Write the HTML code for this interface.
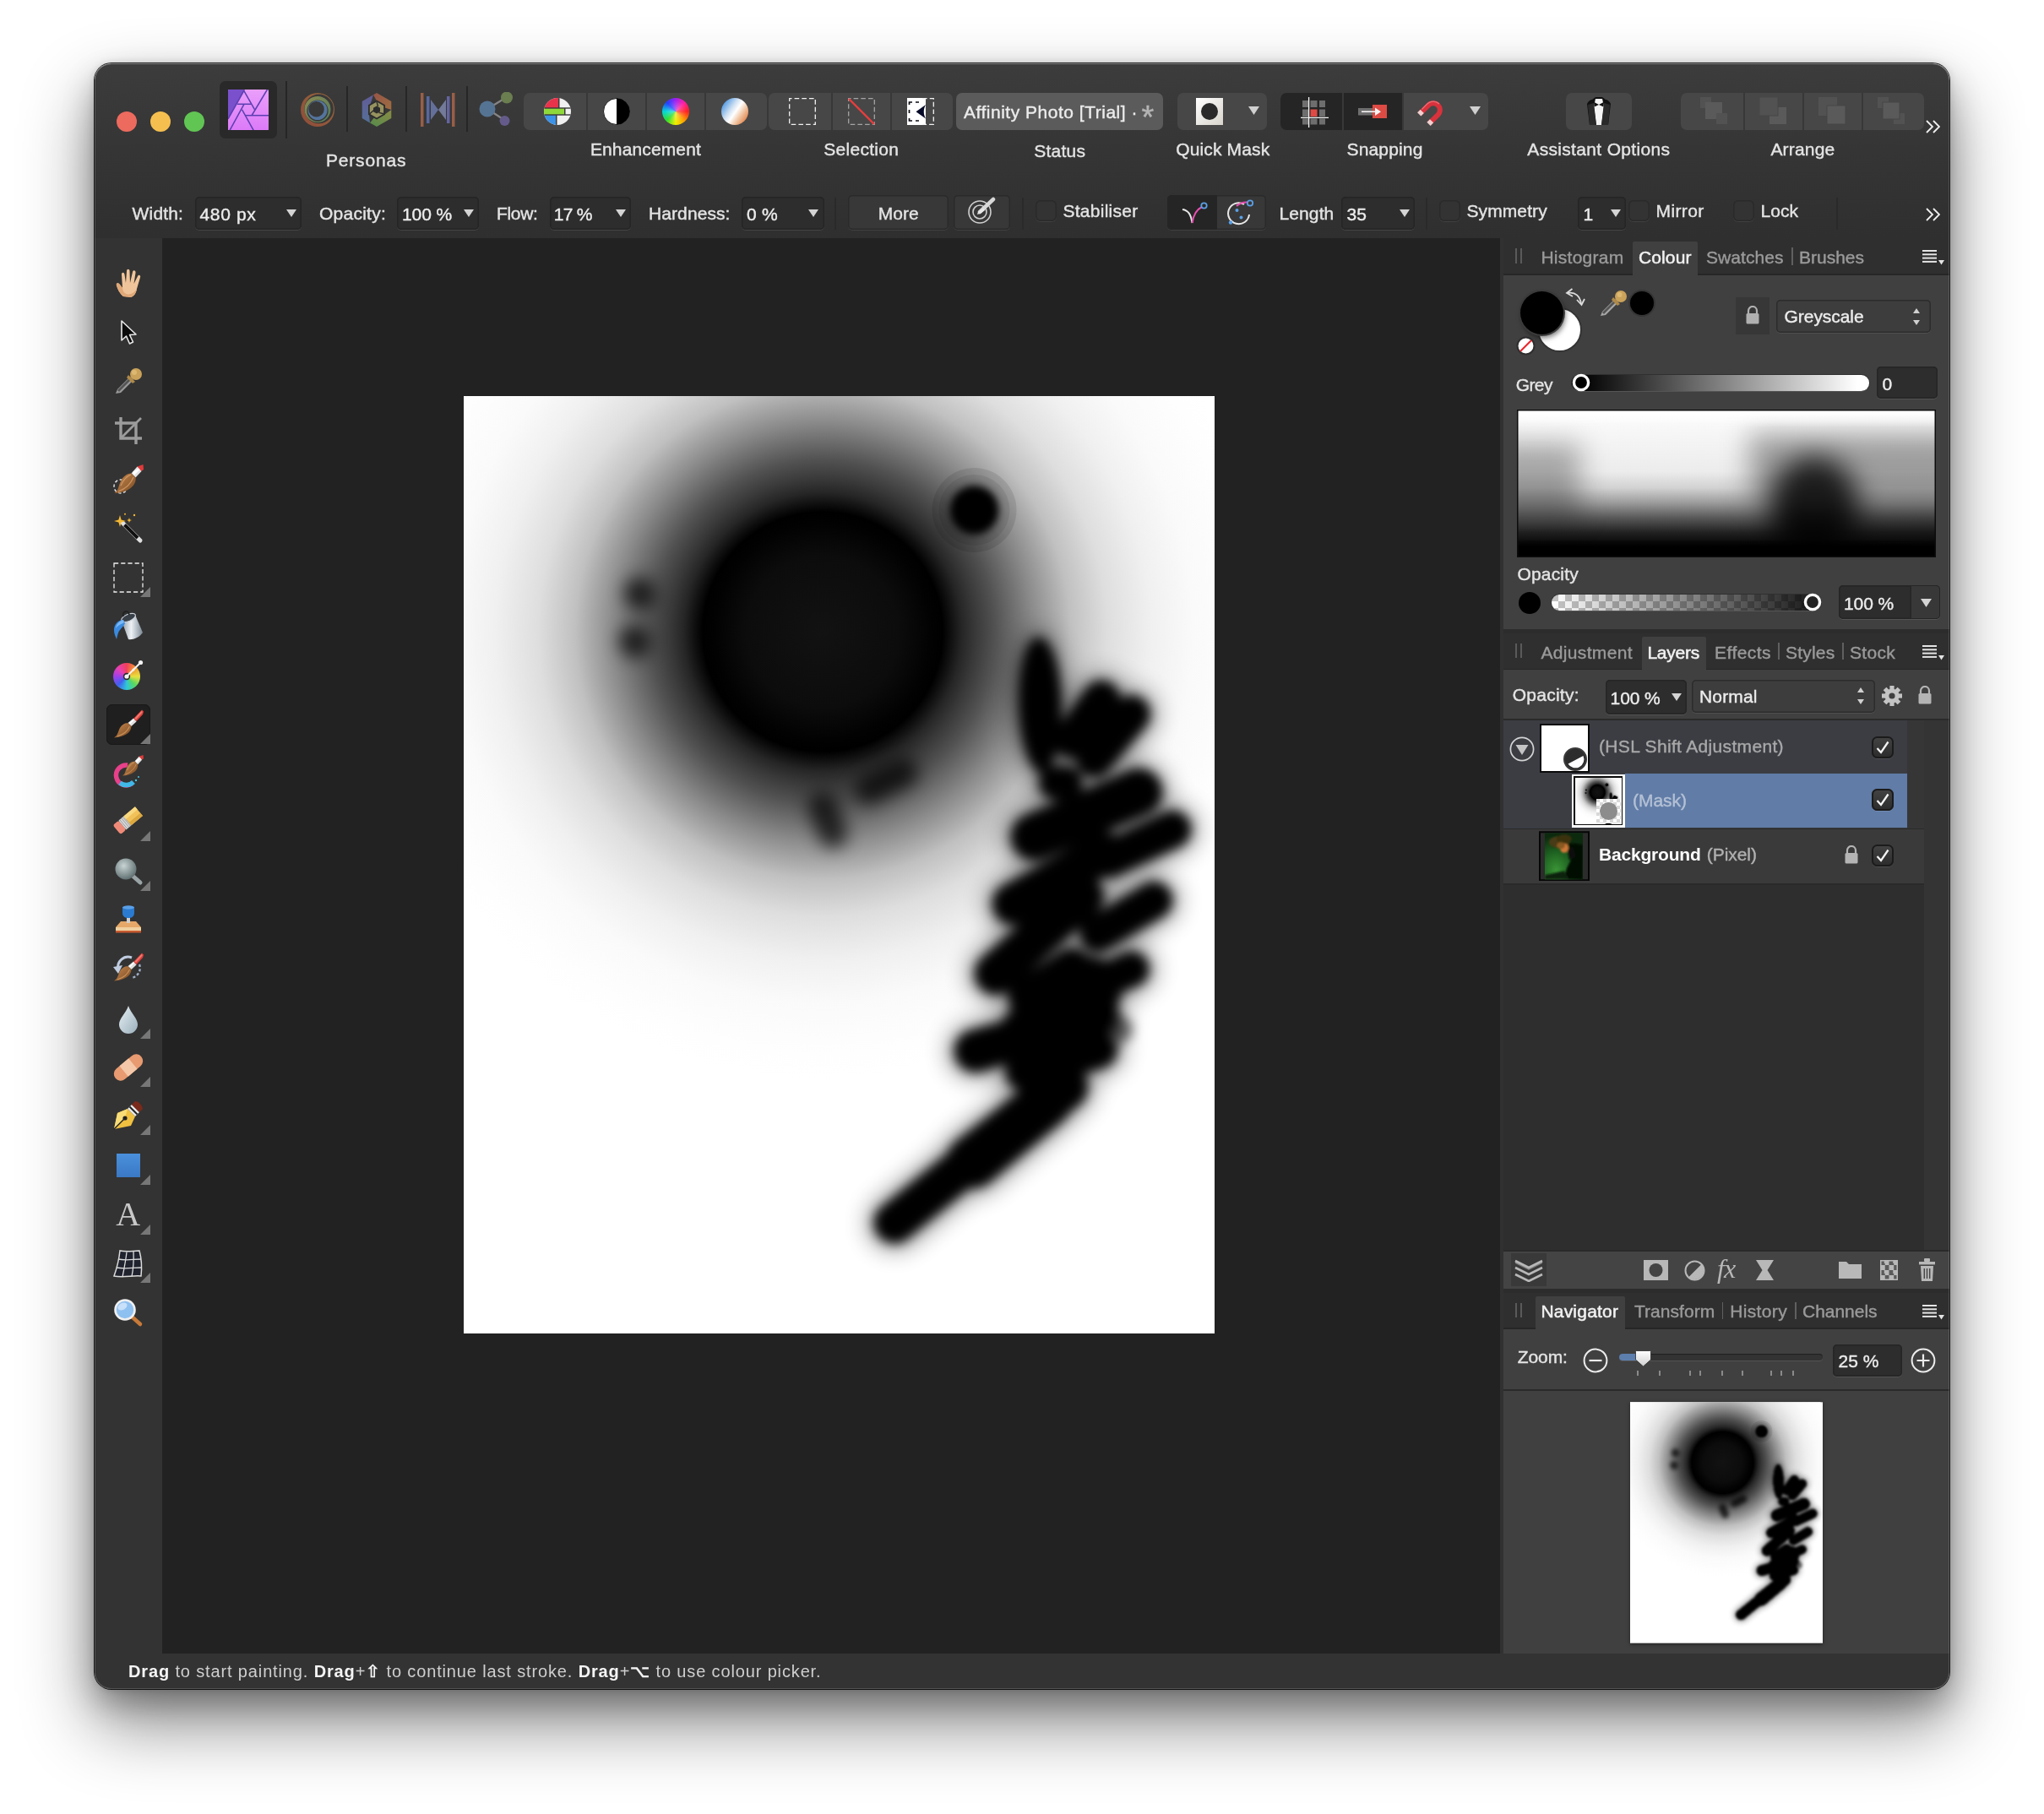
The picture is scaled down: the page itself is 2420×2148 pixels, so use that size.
<!DOCTYPE html>
<html lang="en"><head><meta charset="utf-8"><title>Affinity Photo [Trial]</title>
<style>
html,body{margin:0;padding:0;}
body{width:2420px;height:2148px;position:relative;overflow:hidden;background:#ffffff;font-family:"Liberation Sans",sans-serif;}
</style></head><body>
<div style="position:absolute;left:112px;top:75px;width:2196px;height:1925px;border-radius:20px;background:linear-gradient(#3c3c3c 0px,#353535 105px,#2f2f2f 207px,#2f2f2f 100%);box-shadow:0 0 0 1px rgba(0,0,0,.85),0 40px 84px 2px rgba(0,0,0,.46),0 18px 36px rgba(0,0,0,.26),0 0 10px rgba(0,0,0,.15);"></div>
<div style="position:absolute;left:0;top:0;width:2420px;height:2148px;clip-path:inset(75px 112px 148px 112px round 20px);will-change:transform;"><div style="position:absolute;left:111.0px;top:282.0px;width:81.0px;height:1676.0px;background:#333333;"></div>
<div style="position:absolute;left:192.0px;top:282.0px;width:1584.0px;height:1676.0px;background:#222222;"></div>
<div style="position:absolute;left:1776.0px;top:282.0px;width:4.0px;height:1676.0px;background:#313131;"></div>
<div style="position:absolute;left:1780.0px;top:282.0px;width:528.0px;height:1676.0px;background:#404040;"></div>
<svg style="position:absolute;left:549.0px;top:469.0px;" width="889" height="1110" viewBox="0 0 889 1110"><defs><radialGradient id="ag" gradientUnits="userSpaceOnUse" cx="425" cy="279" r="530"><stop offset="0.0" stop-color="#121212"/><stop offset="0.1698" stop-color="#0c0c0c"/><stop offset="0.2415" stop-color="#020202"/><stop offset="0.2679" stop-color="#000"/><stop offset="0.2868" stop-color="#101010"/><stop offset="0.3113" stop-color="#262626"/><stop offset="0.3396" stop-color="#383838"/><stop offset="0.3849" stop-color="#525252"/><stop offset="0.4415" stop-color="#787878"/><stop offset="0.4679" stop-color="#8a8a8a"/><stop offset="0.5283" stop-color="#b0b0b0"/><stop offset="0.5528" stop-color="#c0c0c0"/><stop offset="0.6358" stop-color="#dedede"/><stop offset="0.7321" stop-color="#f0f0f0"/><stop offset="0.8283" stop-color="#fafafa"/><stop offset="0.9434" stop-color="#fefefe"/><stop offset="1.0" stop-color="#ffffff"/></radialGradient><filter id="ab7" x="-50%" y="-50%" width="200%" height="200%"><feGaussianBlur stdDeviation="7"/></filter><filter id="ab9" x="-50%" y="-50%" width="200%" height="200%"><feGaussianBlur stdDeviation="10"/></filter><filter id="ab14" x="-50%" y="-50%" width="200%" height="200%"><feGaussianBlur stdDeviation="14"/></filter><filter id="ab5" x="-50%" y="-50%" width="200%" height="200%"><feGaussianBlur stdDeviation="5"/></filter><clipPath id="ac"><rect x="0" y="0" width="889" height="1110"/></clipPath></defs><g clip-path="url(#ac)"><rect x="0" y="0" width="889" height="1110" fill="#fff"/><circle cx="425" cy="279" r="530" fill="url(#ag)"/><circle cx="604.5" cy="135" r="50" fill="#000" opacity="0.10"/><circle cx="604.5" cy="135" r="42" fill="#000" opacity="0.08"/><circle cx="604.5" cy="135" r="29" fill="#000" filter="url(#ab5)"/><g filter="url(#ab9)" opacity="0.72" stroke="#000" stroke-linecap="round" fill="none"><path d="M208 233 L209 235" stroke-width="36"/><path d="M202 290 L203 292" stroke-width="36"/><path d="M425 486 L437 518" stroke-width="34"/><path d="M480 466 L520 446" stroke-width="34"/></g><g filter="url(#ab14)" stroke="#000" fill="#000" stroke-linecap="round" opacity="0.42"><ellipse cx="682.5" cy="366" rx="33.0" ry="88.0" stroke="none" transform="rotate(-1.5 682.5 366)"/><path d="M755 359 L720 407" stroke-width="60" fill="none"/><path d="M790.6 376.5 L746.5 429.5" stroke-width="60" fill="none"/><path d="M701 458 L712.5 458" stroke-width="56" fill="none"/><path d="M799 469 L676 522" stroke-width="72" fill="none"/><path d="M839 513 L764 548.5" stroke-width="60" fill="none"/><path d="M758 541 L651 601.5" stroke-width="66" fill="none"/><path d="M817 597 L751 636.7" stroke-width="60" fill="none"/><path d="M733 592.6 L630 684" stroke-width="66" fill="none"/><path d="M790.6 678.6 L755 694" stroke-width="58" fill="none"/><path d="M720 676.4 L667 711.7" stroke-width="62" fill="none"/><path d="M740 702 L672 758" stroke-width="94" fill="none"/><path d="M751 733.7 L606 775.6" stroke-width="66" fill="none"/><path d="M751 773.4 L664 800" stroke-width="62" fill="none"/><path d="M711 817.5 L600 905" stroke-width="72" fill="none"/><path d="M690 835 L603 908" stroke-width="76" fill="none"/><path d="M612 896 L510 979" stroke-width="64" fill="none"/></g><g filter="url(#ab7)" stroke="#000" fill="#000" stroke-linecap="round" opacity="1"><ellipse cx="682.5" cy="366" rx="25.0" ry="80.0" stroke="none" transform="rotate(-1.5 682.5 366)"/><path d="M755 359 L720 407" stroke-width="44" fill="none"/><path d="M790.6 376.5 L746.5 429.5" stroke-width="44" fill="none"/><path d="M701 458 L712.5 458" stroke-width="40" fill="none"/><path d="M799 469 L676 522" stroke-width="56" fill="none"/><path d="M839 513 L764 548.5" stroke-width="44" fill="none"/><path d="M758 541 L651 601.5" stroke-width="50" fill="none"/><path d="M817 597 L751 636.7" stroke-width="44" fill="none"/><path d="M733 592.6 L630 684" stroke-width="50" fill="none"/><path d="M790.6 678.6 L755 694" stroke-width="42" fill="none"/><path d="M720 676.4 L667 711.7" stroke-width="46" fill="none"/><path d="M740 702 L672 758" stroke-width="78" fill="none"/><path d="M751 733.7 L606 775.6" stroke-width="50" fill="none"/><path d="M751 773.4 L664 800" stroke-width="46" fill="none"/><path d="M711 817.5 L600 905" stroke-width="56" fill="none"/><path d="M690 835 L603 908" stroke-width="60" fill="none"/><path d="M612 896 L510 979" stroke-width="48" fill="none"/></g><circle cx="776" cy="750" r="16" fill="#000" opacity="0.55" filter="url(#ab7)"/></g></svg>
<div style="position:absolute;left:137.75px;top:131.75px;width:24.5px;height:24.5px;border-radius:50%;background:#ed6a5e;"></div>
<div style="position:absolute;left:177.75px;top:131.75px;width:24.5px;height:24.5px;border-radius:50%;background:#f5bf4f;"></div>
<div style="position:absolute;left:217.75px;top:131.75px;width:24.5px;height:24.5px;border-radius:50%;background:#61c554;"></div>
<div style="position:absolute;left:260.0px;top:96.0px;width:68.0px;height:68.0px;background:#292929;border-radius:7px;"></div>
<svg style="position:absolute;left:270.0px;top:105.7px;" width="48" height="48.4" viewBox="0 0 48 48.4"><defs><linearGradient id="pp" x1="0" y1="0" x2="0" y2="1"><stop offset="0" stop-color="#ea9ffb"/><stop offset="1" stop-color="#dc7af8"/></linearGradient></defs>
<rect x="0" y="0" width="48" height="48.4" rx="1.5" fill="url(#pp)"/>
<path d="M0 1.5 Q0 0 1.5 0 H19.4 L0 34.7 Z" fill="#7a50cc"/>
<g stroke="#5a3fb0" stroke-width="1.5" fill="none" stroke-linecap="butt"><path d="M19.4 0.3 L0 34.9"/><path d="M46.4 0 L28.2 30.5"/><path d="M19 1.8 L31.6 23.9"/><path d="M11 17.3 H27.4"/><path d="M18.8 17.6 L2 48.4"/><path d="M16.6 23.8 L30.2 48.4"/><path d="M20.2 30.7 H48"/></g></svg>
<div style="position:absolute;left:338.0px;top:96.0px;width:2.0px;height:68.0px;background:#262626;"></div>
<div style="position:absolute;left:410.0px;top:102.0px;width:2.0px;height:54.0px;background:#262626;"></div>
<div style="position:absolute;left:480.0px;top:102.0px;width:2.0px;height:54.0px;background:#262626;"></div>
<div style="position:absolute;left:552.0px;top:102.0px;width:2.0px;height:54.0px;background:#262626;"></div>
<svg style="position:absolute;left:356.0px;top:110.0px;opacity:.85;" width="40" height="40" viewBox="0 0 40 40"><defs><linearGradient id="lq1" x1="1" y1="0" x2="0" y2="1"><stop offset="0" stop-color="#a8703c"/><stop offset="1" stop-color="#a0503a"/></linearGradient><linearGradient id="lq2" x1="0" y1="0" x2="1" y2="1"><stop offset="0" stop-color="#9a9a58"/><stop offset="1" stop-color="#5a8a60"/></linearGradient></defs>
<path fill-rule="evenodd" fill="url(#lq1)" d="M20 0 A20 20 0 1 0 20 40 A20 20 0 1 0 20 0 Z M21.6 1.6 A17.3 17.3 0 1 1 21.6 36.2 A17.3 17.3 0 1 1 21.6 1.6 Z"/>
<path fill-rule="evenodd" fill="url(#lq2)" d="M20 4 A15.5 15.5 0 1 0 20 35 A15.5 15.5 0 1 0 20 4 Z M20 8.6 A12.6 12.6 0 1 1 20 33.8 A12.6 12.6 0 1 1 20 8.6 Z"/>
<path fill-rule="evenodd" fill="#5a7fae" d="M20 9 A11.5 11.5 0 1 0 20 32 A11.5 11.5 0 1 0 20 9 Z M18.6 10 A9.2 9.2 0 1 1 18.6 28.4 A9.2 9.2 0 1 1 18.6 10 Z"/></svg>
<svg style="position:absolute;left:428.0px;top:110.0px;opacity:.85;" width="36" height="40" viewBox="0 0 36 40"><defs><linearGradient id="dv1" x1="0" y1="0" x2="0" y2="1"><stop offset="0" stop-color="#6a62a8"/><stop offset="1" stop-color="#5a7aa8"/></linearGradient><linearGradient id="dv2" x1="0" y1="0" x2="1" y2="1"><stop offset="0" stop-color="#a85a4a"/><stop offset="1" stop-color="#b07844"/></linearGradient><linearGradient id="dv3" x1="1" y1="0" x2="0" y2="1"><stop offset="0" stop-color="#9a9a48"/><stop offset="1" stop-color="#5a9a50"/></linearGradient></defs>
<g transform="translate(18 20)"><path d="M-4 -17.7 L0 -20 L17.3 -10 V0 L8 -3 L0 -10.5 Z" fill="url(#dv2)"/><path d="M17.3 0 V10 L0 20 L-8 15.4 L-2 8 L9.5 5.5 Z" fill="url(#dv3)"/><path d="M-8 15.4 L-17.3 10 V-10 L-4 -17.7 L-8 -5 L-9 5.5 Z" fill="url(#dv1)"/>
<path d="M0 -11.5 L10 -5.8 V5.8 L0 11.5 L-10 5.8 V-5.8 Z" fill="#2c2c2c"/><path d="M0 -9.5 L8.2 -4.7 V4.7 L0 9.5 L-8.2 4.7 V-4.7 Z" fill="#a8a468"/><path d="M0 -4.6 L4 -2.3 V2.3 L0 4.6 L-4 2.3 V-2.3 Z" fill="#2c2c2c"/><path d="M0 -9.5 L1.5 -4 M8.2 4.7 L2.5 3.4 M-8.2 4.7 L-3.8 .8" stroke="#2c2c2c" stroke-width="1.4"/></g></svg>
<svg style="position:absolute;left:497.5px;top:110.0px;opacity:.88;" width="41" height="40" viewBox="0 0 41 40"><rect x="0" y="0" width="3.5" height="40" fill="#a5654a"/><rect x="7" y="4" width="3.5" height="32" fill="#5e6fae"/><path d="M12 8 L21 20 L12 32 Z" fill="#6a78a8"/><path d="M30 8 L21 20 L30 32 Z" fill="#7b83a8"/><rect x="31" y="4" width="3.5" height="32" fill="#6a6ab0"/><rect x="37" y="0" width="3.5" height="40" fill="#a5654a"/></svg>
<svg style="position:absolute;left:567.0px;top:109.0px;opacity:.92;" width="42" height="42" viewBox="0 0 42 42"><path d="M10 20 L33 6 M10 20 L30 33" stroke="#8c8c8c" stroke-width="2.2"/><circle cx="10" cy="20" r="9.5" fill="#587a9c"/><circle cx="33" cy="6.5" r="7" fill="#6f8552"/><circle cx="30.5" cy="34" r="6" fill="#6a5f92"/></svg>
<div style="position:absolute;left:620.0px;top:110.0px;width:288.0px;height:44.0px;background:#474747;border-radius:7px;"></div><div style="position:absolute;left:693.5px;top:110.0px;width:2.0px;height:44.0px;background:#383838;"></div><div style="position:absolute;left:764.0px;top:110.0px;width:2.0px;height:44.0px;background:#383838;"></div><div style="position:absolute;left:834.0px;top:110.0px;width:2.0px;height:44.0px;background:#383838;"></div>
<svg style="position:absolute;left:643.5px;top:116.0px;" width="32" height="32" viewBox="0 0 32 32"><defs><clipPath id="alc"><circle cx="16" cy="16" r="16"/></clipPath></defs><g clip-path="url(#alc)"><rect width="32" height="32" fill="#f0f0f0"/><rect x="0" y="0" width="17" height="12" fill="#e8334b"/><rect x="0" y="12" width="24" height="8" fill="#8fd83a"/><rect x="0" y="20" width="14" height="12" fill="#3c92e6"/><rect x="17" y="0" width="1.5" height="12" fill="#3a3a3a"/><rect x="0" y="11.3" width="32" height="1.4" fill="#3a3a3a"/><rect x="0" y="19.3" width="32" height="1.4" fill="#3a3a3a"/><rect x="24" y="12" width="1.5" height="8" fill="#3a3a3a"/><rect x="14" y="20" width="1.5" height="12" fill="#3a3a3a"/></g></svg>
<svg style="position:absolute;left:713.5px;top:116.0px;" width="32" height="32" viewBox="0 0 32 32"><circle cx="16" cy="16" r="15.5" fill="#fff" stroke="#1a1a1a" stroke-width="1"/><path d="M16 .5 A15.5 15.5 0 0 1 16 31.5 Z" fill="#000"/></svg>
<div style="position:absolute;left:783.5px;top:116px;width:32px;height:32px;border-radius:50%;background:radial-gradient(circle,rgba(255,255,255,.35) 0,rgba(255,255,255,0) 60%),conic-gradient(from 90deg,#ff2020,#ff9a00,#f0f000,#30e030,#00d8d8,#2040ff,#a020f0,#ff20a0,#ff2020);"></div>
<div style="position:absolute;left:853.5px;top:116px;width:32px;height:32px;border-radius:50%;background:linear-gradient(125deg,#3c8de0 8%,#cfe0f2 38%,#ffffff 52%,#f0c8a8 68%,#e0783a 92%);"></div>
<div style="position:absolute;left:910.0px;top:110.0px;width:218.0px;height:44.0px;background:#474747;border-radius:7px;"></div><div style="position:absolute;left:983.5px;top:110.0px;width:2.0px;height:44.0px;background:#383838;"></div><div style="position:absolute;left:1054.0px;top:110.0px;width:2.0px;height:44.0px;background:#383838;"></div>
<svg style="position:absolute;left:934.0px;top:116.0px;" width="32" height="32" viewBox="0 0 32 32"><rect x=".7" y=".7" width="30.6" height="30.6" fill="none" stroke="#f2f2f2" stroke-width="1.3" stroke-dasharray="5.6 3.1" stroke-dashoffset="2.8"/></svg>
<svg style="position:absolute;left:1004.0px;top:116.0px;" width="32" height="32" viewBox="0 0 32 32"><rect x=".7" y=".7" width="30.6" height="30.6" fill="none" stroke="#a4a4a4" stroke-width="1.3" stroke-dasharray="5.6 3.1" stroke-dashoffset="2.8"/><path d="M1 1 L31 31" stroke="#ea3d3d" stroke-width="2.4"/></svg>
<svg style="position:absolute;left:1074.0px;top:116.0px;" width="32" height="32" viewBox="0 0 32 32"><rect x="0" y="0" width="22" height="32" fill="#fff"/><path d="M18 .7 H31.3 V31.3 H18" fill="none" stroke="#f2f2f2" stroke-width="1.3" stroke-dasharray="5.6 3.1"/><path d="M2.5 8 V5 H6 M10 5 H14 M2.5 14 V18 M2.5 24 V27 H6 M10 27 H14" fill="none" stroke="#0a0a14" stroke-width="1.7"/><path d="M22 8 L10.5 16.2 L22 24.5 C19 19.5 19 13 22 8 Z" fill="#050a28"/></svg>
<div style="position:absolute;left:1132.0px;top:110.0px;width:245.0px;height:44.0px;background:#5b5b5b;border-radius:7px;"></div>
<span style="position:absolute;left:1141.0px;top:120.0px;font-size:21px;line-height:25px;color:#ececec;white-space:nowrap;-webkit-text-stroke:0.4px #ececec;letter-spacing:0.51px;">Affinity Photo [Trial] ·</span>
<span style="position:absolute;left:1351.5px;top:116.0px;font-size:38px;line-height:46px;color:#b4b4b4;white-space:nowrap;-webkit-text-stroke:0.4px #b4b4b4;">*</span>
<div style="position:absolute;left:1393.5px;top:110.0px;width:106.5px;height:44.0px;background:#474747;border-radius:7px;"></div>
<svg style="position:absolute;left:1416.0px;top:116.0px;" width="32" height="32" viewBox="0 0 32 32"><defs><linearGradient id="qm" x1="0" y1="0" x2="1" y2="1"><stop offset="0" stop-color="#ffffff"/><stop offset="1" stop-color="#d8d4cc"/></linearGradient></defs><rect width="32" height="32" fill="url(#qm)"/><circle cx="16" cy="16" r="10" fill="#2a2a2a"/></svg>
<svg style="position:absolute;left:1478.0px;top:126.0px;" width="13" height="10" viewBox="0 0 13 10"><path d="M0 0 H13 L6.5 10 Z" fill="#d0d0d0"/></svg>
<div style="position:absolute;left:1516.0px;top:110.0px;width:246.0px;height:44.0px;background:#474747;border-radius:7px;"></div>
<div style="position:absolute;left:1516.0px;top:110.0px;width:145.0px;height:44.0px;background:#252525;border-radius:7px 0 0 7px;"></div>
<div style="position:absolute;left:1589.0px;top:110.0px;width:2.0px;height:44.0px;background:#383838;"></div>
<div style="position:absolute;left:1660.0px;top:110.0px;width:2.0px;height:44.0px;background:#383838;"></div>
<svg style="position:absolute;left:1540.0px;top:118.0px;overflow:visible;" width="34" height="30" viewBox="0 -1 34 30"><g fill="#6e6e6e"><rect x="2" y="0" width="7" height="8"/><rect x="11.5" y="0" width="8" height="8"/><rect x="22" y="0" width="7" height="8"/><rect x="2" y="10.5" width="7" height="8.5"/><rect x="22" y="10.5" width="7" height="8.5"/><rect x="2" y="21.5" width="7" height="7"/><rect x="11.5" y="21.5" width="8" height="7"/><rect x="22" y="21.5" width="7" height="7"/></g><rect x="11.5" y="10.5" width="8" height="8.5" fill="#dd4b44"/><path d="M9.6 -4 V32 M0 20.3 H33" stroke="#f4f4f4" stroke-width="1.3"/></svg>
<svg style="position:absolute;left:1608.0px;top:124.0px;" width="34" height="16" viewBox="0 0 34 16"><rect x="0" y="4" width="17" height="8.5" fill="#6e6e6e"/><rect x="17" y="0" width="17" height="16" fill="#dd4b44"/><path d="M4 8.2 H22" stroke="#f4f4f4" stroke-width="1.6"/><path d="M20 3.5 L27 8.2 L20 13 Z" fill="#f4f4f4"/></svg>
<svg style="position:absolute;left:1677.0px;top:116.0px;overflow:visible;" width="34" height="34" viewBox="0 0 34 34"><g transform="rotate(45 17 17)"><path d="M9 28 V13 A8 8 0 0 1 25 13 V28" fill="none" stroke="#d8323c" stroke-width="6"/><path d="M9 28.5 V23.5 M25 28.5 V23.5" stroke="#f0d0d0" stroke-width="6"/><path d="M7 22 V13 A10 10 0 0 1 17 3" fill="none" stroke="#f07078" stroke-width="1.4" opacity=".9"/></g></svg>
<svg style="position:absolute;left:1739.5px;top:126.0px;" width="13" height="10" viewBox="0 0 13 10"><path d="M0 0 H13 L6.5 10 Z" fill="#d0d0d0"/></svg>
<div style="position:absolute;left:1854.0px;top:110.0px;width:78.0px;height:44.0px;background:#474747;border-radius:7px;"></div>
<svg style="position:absolute;left:1875.0px;top:114.0px;" width="36" height="36" viewBox="0 0 36 36"><path d="M10 4 C8 4 5 6 4 9 L7 34 H29 L32 9 C31 6 28 4 26 4 L22 1 H14 Z" fill="#101010"/><path d="M14 3 H22 L24 12 L21 34 H15 L12 12 Z" fill="#f4f4f4"/><path d="M12.5 7 L18 10 L23.5 7 V12.5 L18 10 L12.5 12.5 Z" fill="#101010"/><path d="M5 10 L12 8 L15 34 H7 Z M31 10 L24 8 L21 34 H29 Z" fill="#2a2a2a"/></svg>
<div style="position:absolute;left:1990.0px;top:110.0px;width:288.0px;height:44.0px;background:#474747;border-radius:7px;"></div><div style="position:absolute;left:2063.5px;top:110.0px;width:2.0px;height:44.0px;background:#383838;"></div><div style="position:absolute;left:2134.0px;top:110.0px;width:2.0px;height:44.0px;background:#383838;"></div><div style="position:absolute;left:2204.0px;top:110.0px;width:2.0px;height:44.0px;background:#383838;"></div>
<svg style="position:absolute;left:2013.0px;top:115.0px;" width="34" height="34" viewBox="0 0 34 34"><rect x="0" y="0" width="13" height="13" fill="#525252"/><rect x="6" y="6" width="20" height="20" fill="#5a5a5a"/><rect x="19" y="19" width="13" height="13" fill="#525252"/></svg>
<svg style="position:absolute;left:2083.0px;top:115.0px;" width="34" height="34" viewBox="0 0 34 34"><rect x="12" y="12" width="20" height="20" fill="#5a5a5a"/><rect x="0" y="0" width="22" height="22" fill="#525252" stroke="#474747" stroke-width="1"/></svg>
<svg style="position:absolute;left:2153.0px;top:115.0px;" width="34" height="34" viewBox="0 0 34 34"><rect x="0" y="0" width="22" height="22" fill="#525252"/><rect x="10" y="10" width="22" height="22" fill="#5a5a5a" stroke="#474747" stroke-width="1"/></svg>
<svg style="position:absolute;left:2223.0px;top:115.0px;" width="34" height="34" viewBox="0 0 34 34"><rect x="0" y="0" width="13" height="13" fill="#525252"/><rect x="19" y="19" width="13" height="13" fill="#525252"/><rect x="6" y="6" width="20" height="20" fill="#5a5a5a" stroke="#474747" stroke-width="1"/></svg>
<svg style="position:absolute;left:2280.0px;top:141.5px;" width="17" height="16" viewBox="0 0 17 16"><path d="M1 1 L8 8 L1 15 M9 1 L16 8 L9 15" fill="none" stroke="#f0f0f0" stroke-width="1.8"/></svg>
<svg style="position:absolute;left:2280.0px;top:246.0px;" width="17" height="16" viewBox="0 0 17 16"><path d="M1 1 L8 8 L1 15 M9 1 L16 8 L9 15" fill="none" stroke="#f0f0f0" stroke-width="1.8"/></svg>
<span style="position:absolute;left:385.9px;top:177.0px;font-size:21px;line-height:25px;color:#e4e4e4;white-space:nowrap;-webkit-text-stroke:0.4px #e4e4e4;letter-spacing:0.85px;">Personas</span>
<span style="position:absolute;left:698.9px;top:164.0px;font-size:21px;line-height:25px;color:#e4e4e4;white-space:nowrap;-webkit-text-stroke:0.4px #e4e4e4;letter-spacing:0.13px;">Enhancement</span>
<span style="position:absolute;left:975.2px;top:164.0px;font-size:21px;line-height:25px;color:#e4e4e4;white-space:nowrap;-webkit-text-stroke:0.4px #e4e4e4;letter-spacing:0.29px;">Selection</span>
<span style="position:absolute;left:1224.2px;top:166.0px;font-size:21px;line-height:25px;color:#e4e4e4;white-space:nowrap;-webkit-text-stroke:0.4px #e4e4e4;letter-spacing:0.24px;">Status</span>
<span style="position:absolute;left:1392.3px;top:164.0px;font-size:21px;line-height:25px;color:#e4e4e4;white-space:nowrap;-webkit-text-stroke:0.4px #e4e4e4;letter-spacing:0.13px;">Quick Mask</span>
<span style="position:absolute;left:1594.5px;top:164.0px;font-size:21px;line-height:25px;color:#e4e4e4;white-space:nowrap;-webkit-text-stroke:0.4px #e4e4e4;letter-spacing:0.16px;">Snapping</span>
<span style="position:absolute;left:1808.3px;top:164.0px;font-size:21px;line-height:25px;color:#e4e4e4;white-space:nowrap;-webkit-text-stroke:0.4px #e4e4e4;letter-spacing:0.33px;">Assistant Options</span>
<span style="position:absolute;left:2096.4px;top:164.0px;font-size:21px;line-height:25px;color:#e4e4e4;white-space:nowrap;-webkit-text-stroke:0.4px #e4e4e4;letter-spacing:0.18px;">Arrange</span>
<span style="position:absolute;left:156.6px;top:240.0px;font-size:21px;line-height:25px;color:#e4e4e4;white-space:nowrap;-webkit-text-stroke:0.4px #e4e4e4;letter-spacing:0.16px;">Width:</span>
<div style="position:absolute;left:230.6px;top:233px;width:126.79999999999998px;height:39px;background:#2d2d2d;border-radius:5px;box-shadow:inset 0 0 0 1.5px #252525,0 1px 0 rgba(255,255,255,.10);"></div><span style="position:absolute;left:236.5px;top:241.0px;font-size:21px;line-height:25px;color:#ececec;white-space:nowrap;-webkit-text-stroke:0.4px #ececec;letter-spacing:0.66px;">480 px</span><svg style="position:absolute;left:338.5px;top:247.5px;" width="12" height="9" viewBox="0 0 12 9"><path d="M0 0 H12 L6 9 Z" fill="#d4d4d4"/></svg>
<span style="position:absolute;left:378.0px;top:240.0px;font-size:21px;line-height:25px;color:#e4e4e4;white-space:nowrap;-webkit-text-stroke:0.4px #e4e4e4;letter-spacing:0.25px;">Opacity:</span>
<div style="position:absolute;left:470.4px;top:233px;width:96.89999999999998px;height:39px;background:#2d2d2d;border-radius:5px;box-shadow:inset 0 0 0 1.5px #252525,0 1px 0 rgba(255,255,255,.10);"></div><span style="position:absolute;left:476.0px;top:241.0px;font-size:21px;line-height:25px;color:#ececec;white-space:nowrap;-webkit-text-stroke:0.4px #ececec;letter-spacing:-0.11px;">100 %</span><svg style="position:absolute;left:549.0px;top:247.5px;" width="12" height="9" viewBox="0 0 12 9"><path d="M0 0 H12 L6 9 Z" fill="#d4d4d4"/></svg>
<span style="position:absolute;left:588.0px;top:240.0px;font-size:21px;line-height:25px;color:#e4e4e4;white-space:nowrap;-webkit-text-stroke:0.4px #e4e4e4;letter-spacing:-0.33px;">Flow:</span>
<div style="position:absolute;left:650.5px;top:233px;width:96.79999999999995px;height:39px;background:#2d2d2d;border-radius:5px;box-shadow:inset 0 0 0 1.5px #252525,0 1px 0 rgba(255,255,255,.10);"></div><span style="position:absolute;left:655.8px;top:241.0px;font-size:21px;line-height:25px;color:#ececec;white-space:nowrap;-webkit-text-stroke:0.4px #ececec;letter-spacing:-0.72px;">17 %</span><svg style="position:absolute;left:729.0px;top:247.5px;" width="12" height="9" viewBox="0 0 12 9"><path d="M0 0 H12 L6 9 Z" fill="#d4d4d4"/></svg>
<span style="position:absolute;left:768.0px;top:240.0px;font-size:21px;line-height:25px;color:#e4e4e4;white-space:nowrap;-webkit-text-stroke:0.4px #e4e4e4;letter-spacing:0.09px;">Hardness:</span>
<div style="position:absolute;left:878px;top:233px;width:97.70000000000005px;height:39px;background:#2d2d2d;border-radius:5px;box-shadow:inset 0 0 0 1.5px #252525,0 1px 0 rgba(255,255,255,.10);"></div><span style="position:absolute;left:884.0px;top:241.0px;font-size:21px;line-height:25px;color:#ececec;white-space:nowrap;-webkit-text-stroke:0.4px #ececec;letter-spacing:0.27px;">0 %</span><svg style="position:absolute;left:957.0px;top:247.5px;" width="12" height="9" viewBox="0 0 12 9"><path d="M0 0 H12 L6 9 Z" fill="#d4d4d4"/></svg>
<div style="position:absolute;left:988.0px;top:234.0px;width:2.0px;height:38.0px;background:#2a2a2a;"></div>
<div style="position:absolute;left:1004.4px;top:231px;width:118.60000000000002px;height:41px;background:#383838;border-radius:5px;box-shadow:inset 0 0 0 1.5px #2a2a2a,0 1px 0 rgba(255,255,255,.08);"></div>
<span style="position:absolute;left:1039.7px;top:240.0px;font-size:21px;line-height:25px;color:#e4e4e4;white-space:nowrap;-webkit-text-stroke:0.4px #e4e4e4;letter-spacing:0.04px;">More</span>
<div style="position:absolute;left:1128.5px;top:231px;width:67.0px;height:41px;background:#383838;border-radius:5px;box-shadow:inset 0 0 0 1.5px #2a2a2a,0 1px 0 rgba(255,255,255,.08);"></div>
<svg style="position:absolute;left:1146.0px;top:233.0px;" width="33" height="33" viewBox="0 0 33 33"><circle cx="14" cy="18" r="13" fill="none" stroke="#cfcfcf" stroke-width="1.6"/><circle cx="14" cy="18" r="8" fill="none" stroke="#cfcfcf" stroke-width="1.6"/><path d="M14 18 L30 3" stroke="#d8d8d8" stroke-width="4.5" stroke-linecap="round"/><path d="M11 21 C12 17 15 15 19 14 L20 16 C17 18 15 20 11 21 Z" fill="#e8e8e8"/></svg>
<div style="position:absolute;left:1210.0px;top:234.0px;width:2.0px;height:38.0px;background:#2a2a2a;"></div>
<div style="position:absolute;left:1226px;top:237px;width:25px;height:25px;background:#333333;border-radius:6px;box-shadow:inset 0 0 0 1.5px #2a2a2a,0 1px 0 rgba(255,255,255,.08);"></div>
<span style="position:absolute;left:1258.5px;top:237.0px;font-size:21px;line-height:25px;color:#e4e4e4;white-space:nowrap;-webkit-text-stroke:0.4px #e4e4e4;letter-spacing:0.26px;">Stabiliser</span>
<div style="position:absolute;left:1382px;top:231px;width:117px;height:41px;background:#383838;border-radius:5px;box-shadow:inset 0 0 0 1.5px #2a2a2a,0 1px 0 rgba(255,255,255,.08);"></div>
<div style="position:absolute;left:1382px;top:231px;width:59px;height:41px;background:#252525;border-radius:5px 0 0 5px;"></div>
<svg style="position:absolute;left:1398.0px;top:237.0px;" width="33" height="30" viewBox="0 0 33 30"><path d="M2 11 C9 12 12 17 13.5 27" fill="none" stroke="#e8e8e8" stroke-width="2"/><path d="M13.5 27 C15 17 19 11 25 8" fill="none" stroke="#e64fb0" stroke-width="2"/><circle cx="27.5" cy="6.5" r="3.2" fill="none" stroke="#5aa0e6" stroke-width="1.8"/></svg>
<svg style="position:absolute;left:1452.0px;top:236.0px;" width="33" height="32" viewBox="0 0 33 32"><path d="M21 6 A12.5 12.5 0 1 0 27 18" fill="none" stroke="#e8e8e8" stroke-width="2"/><path d="M12 8 C16 4 21 3 26 3.5" fill="none" stroke="#e64fb0" stroke-width="2"/><circle cx="28" cy="4.5" r="3.2" fill="none" stroke="#5aa0e6" stroke-width="1.8"/><circle cx="5" cy="27.5" r="2.2" fill="#5aa0e6"/><circle cx="12.5" cy="13" r="2" fill="#5aa0e6"/><circle cx="17.5" cy="21.5" r="2" fill="#5aa0e6"/></svg>
<span style="position:absolute;left:1514.4px;top:240.0px;font-size:21px;line-height:25px;color:#e4e4e4;white-space:nowrap;-webkit-text-stroke:0.4px #e4e4e4;letter-spacing:0.13px;">Length</span>
<div style="position:absolute;left:1588px;top:233px;width:87px;height:39px;background:#2d2d2d;border-radius:5px;box-shadow:inset 0 0 0 1.5px #252525,0 1px 0 rgba(255,255,255,.10);"></div><span style="position:absolute;left:1594.5px;top:241.0px;font-size:21px;line-height:25px;color:#ececec;white-space:nowrap;-webkit-text-stroke:0.4px #ececec;letter-spacing:0.07px;">35</span><svg style="position:absolute;left:1656.6px;top:247.5px;" width="12" height="9" viewBox="0 0 12 9"><path d="M0 0 H12 L6 9 Z" fill="#d4d4d4"/></svg>
<div style="position:absolute;left:1687.5px;top:234.0px;width:2.0px;height:38.0px;background:#2a2a2a;"></div>
<div style="position:absolute;left:1704.4px;top:237px;width:25px;height:25px;background:#333333;border-radius:6px;box-shadow:inset 0 0 0 1.5px #2a2a2a,0 1px 0 rgba(255,255,255,.08);"></div>
<span style="position:absolute;left:1736.4px;top:237.0px;font-size:21px;line-height:25px;color:#e4e4e4;white-space:nowrap;-webkit-text-stroke:0.4px #e4e4e4;letter-spacing:0.12px;">Symmetry</span>
<div style="position:absolute;left:1868px;top:233px;width:57.40000000000009px;height:39px;background:#2d2d2d;border-radius:5px;box-shadow:inset 0 0 0 1.5px #252525,0 1px 0 rgba(255,255,255,.10);"></div><span style="position:absolute;left:1874.6px;top:241.0px;font-size:21px;line-height:25px;color:#ececec;white-space:nowrap;-webkit-text-stroke:0.4px #ececec;">1</span><svg style="position:absolute;left:1906.8px;top:247.5px;" width="12" height="9" viewBox="0 0 12 9"><path d="M0 0 H12 L6 9 Z" fill="#d4d4d4"/></svg>
<div style="position:absolute;left:1928.3px;top:237px;width:25px;height:25px;background:#333333;border-radius:6px;box-shadow:inset 0 0 0 1.5px #2a2a2a,0 1px 0 rgba(255,255,255,.08);"></div>
<span style="position:absolute;left:1960.6px;top:237.0px;font-size:21px;line-height:25px;color:#e4e4e4;white-space:nowrap;-webkit-text-stroke:0.4px #e4e4e4;letter-spacing:0.36px;">Mirror</span>
<div style="position:absolute;left:2052px;top:237px;width:25px;height:25px;background:#333333;border-radius:6px;box-shadow:inset 0 0 0 1.5px #2a2a2a,0 1px 0 rgba(255,255,255,.08);"></div>
<span style="position:absolute;left:2084.5px;top:237.0px;font-size:21px;line-height:25px;color:#e4e4e4;white-space:nowrap;-webkit-text-stroke:0.4px #e4e4e4;letter-spacing:0.04px;">Lock</span>
<div style="position:absolute;left:2174.0px;top:234.0px;width:2.0px;height:38.0px;background:#2a2a2a;"></div>
<svg style="position:absolute;left:0.0px;top:0.0px;" width="0" height="0" viewBox="0 0 0 0"><defs><linearGradient id="bh" x1="0" y1="0" x2="1" y2="1"><stop offset="0" stop-color="#c98a50"/><stop offset="1" stop-color="#7a4a22"/></linearGradient></defs></svg>
<svg style="position:absolute;left:135.6px;top:318.1px;overflow:visible;" width="32" height="35" viewBox="0 0 30 35"><path d="M9 33 C5 30 2 24 1 20 C0 17 3 16 5 19 L8 23 L7 7 C7 4 10 4 10.5 7 L12 17 L13 3 C13 0 16.5 0 16.5 3 L17 17 L20 4 C20.5 1 24 2 23.5 5 L21.5 18 L26 9 C27 6.5 30 8 29 10.5 L25 24 C24 30 21 33 18 34 Z" fill="#f0c49a"/><path d="M9 33 C5 30 2 24 1 20 C0 17 3 16 5 19 L8 23 L9 27 C11 30 14 31 18 30 C21 29 23 27 25 24 C24 30 21 33 18 34 Z" fill="#e0a878"/></svg>
<svg style="position:absolute;left:140.6px;top:379.0px;overflow:visible;" width="22" height="30" viewBox="0 0 22 30"><path d="M3 1 L3 24 L8.5 19 L12.5 28 L16.5 26 L12.5 17.5 L20 17 Z" fill="#0a0a0a" stroke="#e8e8e8" stroke-width="1.6" stroke-linejoin="round"/></svg>
<svg style="position:absolute;left:134.6px;top:434.5px;overflow:visible;" width="34" height="34" viewBox="0 0 34 34"><path d="M2 31 L4 26 L19 11 L23 15 L8 30 Z" fill="#9a9a9a"/><path d="M4 27 L18 13 L20 15 L6 29 Z" fill="#555"/><path d="M17 9 L25 17 L22 19 L15 12 Z" fill="#b08a48"/><circle cx="26" cy="8" r="7" fill="#caa25a"/><circle cx="24" cy="6" r="3" fill="#dcb872"/></svg>
<svg style="position:absolute;left:134.6px;top:492.5px;overflow:visible;" width="34" height="34" viewBox="0 0 34 34"><g stroke="#9c9c9c" stroke-width="3.4" fill="none"><path d="M8 1 V26 H33"/><path d="M1 8 H26 V33"/><path d="M9 25 L32 2" stroke-width="2.6"/></g></svg>
<svg style="position:absolute;left:133.6px;top:550.0px;overflow:visible;" width="36" height="36" viewBox="0 0 36 36"><circle cx="9" cy="26" r="8" fill="none" stroke="#e4e4e4" stroke-width="1.4" stroke-dasharray="3.5 2.5"/><path d="M28.5 2.5 L35.5 0 L36 6 L32.5 8.5 Z" fill="#e03a3a"/><path d="M21.5 10.5 L28.5 2.5 L33.5 8 L26.5 15.5 Z" fill="#e4e4e4"/><path d="M23 9 L30 4.5 L31.5 6 L24.5 13 Z" fill="#ffffff"/><path d="M21.5 10.5 L26.5 15.5 C28 25 17 33.5 1.5 34 C6 31 6 27 8 22 C10.5 15 16 10.5 21.5 10.5 Z" fill="url(#bh)"/><path d="M6 32 C14 29 21 23 24 15" fill="none" stroke="#e0a870" stroke-width="1.2" opacity=".7"/><path d="M9 25 C12 18 16 14 21 12" fill="none" stroke="#e8b880" stroke-width="1.2" opacity=".6"/></svg>
<svg style="position:absolute;left:134.6px;top:607.6px;overflow:visible;" width="34" height="34" viewBox="0 0 34 34"><path d="M10 11 L31 32" stroke="#e0e0e0" stroke-width="5" stroke-linecap="round"/><path d="M12.5 13.5 L28 29" stroke="#111" stroke-width="4" /><path d="M7 2 L8.6 7.4 L14 9 L8.6 10.6 L7 16 L5.4 10.6 L0 9 L5.4 7.4 Z" fill="#f5b833"/><path d="M18 5 L18.8 7.2 L21 8 L18.8 8.8 L18 11 L17.2 8.8 L15 8 L17.2 7.2 Z" fill="#f5b833"/><circle cx="24" cy="2" r="1.2" fill="#f5b833"/><circle cx="13" cy="0.8" r="1" fill="#f5b833"/></svg>
<svg style="position:absolute;left:133.6px;top:665.7px;overflow:visible;" width="36" height="36" viewBox="0 0 36 36"><rect x="1" y="1" width="34" height="34" fill="none" stroke="#efefef" stroke-width="1.3" stroke-dasharray="5.2 3"/></svg>
<svg style="position:absolute;left:166.0px;top:694.7px;" width="12" height="12" viewBox="0 0 12 12"><path d="M12 0 V12 H0 Z" fill="#777777"/></svg>
<svg style="position:absolute;left:133.6px;top:723.7px;overflow:visible;" width="36" height="36" viewBox="0 0 36 36"><defs><linearGradient id="bk" x1="0" y1="0" x2="1" y2="0"><stop offset="0" stop-color="#8e9aa6"/><stop offset=".45" stop-color="#eef2f6"/><stop offset="1" stop-color="#7c8894"/></linearGradient></defs><path d="M10 11 L26 4 L35 25 C31 31 23 34 18 33 Z" fill="url(#bk)"/><ellipse cx="18" cy="7.5" rx="9" ry="4" transform="rotate(-23 18 7.5)" fill="#3a4048" stroke="#c8d0d8" stroke-width="1.2"/><path d="M12 6 C10 0 18 -3 19 4" fill="none" stroke="#222" stroke-width="1.8"/><path d="M12 10 C6 10 1 15 1 22 C1 27 3 30 4 33 C5 28 6 24 8 22 C10 19 13 17 14 14 Z" fill="#3a8be0"/><path d="M12 10 C8 11 4 14 3 20 C6 16 10 15 13 13 Z" fill="#7ab8f5"/></svg>
<div style="position:absolute;left:133.6px;top:785px;width:32px;height:32px;border-radius:50%;background:conic-gradient(from 0deg,#f0405a,#f09a30,#e8e040,#58d860,#30c8d8,#4060f0,#a040e8,#e840b0,#f0405a);"></div>
<svg style="position:absolute;left:133.6px;top:781.0px;overflow:visible;" width="36" height="36" viewBox="0 0 36 36"><circle cx="16" cy="20" r="4.2" fill="#2a2a2a"/><path d="M16 20 L32 4" stroke="#f4f4f4" stroke-width="2.2"/><circle cx="16" cy="20" r="2.6" fill="#f4f4f4"/><circle cx="24" cy="12" r="1.5" fill="#f4f4f4"/><circle cx="32.5" cy="3.5" r="2.6" fill="#f4f4f4"/></svg>
<div style="position:absolute;left:126px;top:833.5px;width:52px;height:48px;background:#1f1f1f;border-radius:7px;box-shadow:inset 0 0 0 1px #191919;"></div>
<svg style="position:absolute;left:133.6px;top:839.6px;overflow:visible;" width="36" height="36" viewBox="0 0 36 36"><path d="M24 11 L34 0.5 L36 2.5 L35 6 L27 14.5 Z" fill="#e0403c"/><path d="M25.5 10.5 L33.5 2 L34.8 3.2 L27 12 Z" fill="#f07a70"/><path d="M17.5 16 L24 10.5 L27.5 14.5 L21.5 20 Z" fill="#e0e0e0"/><path d="M18.5 16 L24 11.5 L25 12.5 L20 17.5 Z" fill="#ffffff"/><path d="M17.5 16 L21.5 20 C21.5 28 12 33 1 33.5 C5 31 5.5 28 7 24 C9 19 13 16 17.5 16 Z" fill="url(#bh)"/><path d="M5 32 C11 30 17 26 19.5 20" fill="none" stroke="#e0a870" stroke-width="1.1" opacity=".7"/></svg>
<svg style="position:absolute;left:166.0px;top:868.6px;" width="12" height="12" viewBox="0 0 12 12"><path d="M12 0 V12 H0 Z" fill="#777777"/></svg>
<svg style="position:absolute;left:133.6px;top:897.0px;overflow:visible;" width="36" height="36" viewBox="0 0 36 36"><path d="M17 9 A12 12 0 1 0 22 31" fill="none" stroke="#e8408a" stroke-width="5.5"/><path d="M8 30 A12 12 0 0 0 24 29" fill="none" stroke="#40b8e8" stroke-width="5.5"/><g transform="translate(10 -3) scale(.72)"><path d="M28.5 2.5 L35.5 0 L36 6 L32.5 8.5 Z" fill="#e03a3a"/><path d="M21.5 10.5 L28.5 2.5 L33.5 8 L26.5 15.5 Z" fill="#e4e4e4"/><path d="M23 9 L30 4.5 L31.5 6 L24.5 13 Z" fill="#ffffff"/><path d="M21.5 10.5 L26.5 15.5 C28 25 17 33.5 1.5 34 C6 31 6 27 8 22 C10.5 15 16 10.5 21.5 10.5 Z" fill="url(#bh)"/><path d="M6 32 C14 29 21 23 24 15" fill="none" stroke="#e0a870" stroke-width="1.2" opacity=".7"/><path d="M9 25 C12 18 16 14 21 12" fill="none" stroke="#e8b880" stroke-width="1.2" opacity=".6"/></g><circle cx="27" cy="27" r="1.2" fill="#40c8e8"/><circle cx="30" cy="23" r="1" fill="#40c8e8"/></svg>
<svg style="position:absolute;left:133.6px;top:954.8px;overflow:visible;" width="36" height="36" viewBox="0 0 36 36"><g transform="translate(2 2) scale(.88) rotate(-40 17 17)"><rect x="-2" y="9" width="10" height="16" rx="3" fill="#f08a78"/><rect x="8" y="9" width="9" height="16" fill="#d8d8d8"/><path d="M10 9 V25 M13 9 V25 M15.5 9 V25" stroke="#9a9a9a" stroke-width="1"/><rect x="17" y="9" width="20" height="16" fill="#f2c25a"/><rect x="17" y="9" width="20" height="5" fill="#f8d880"/><rect x="17" y="20" width="20" height="5" fill="#dca840"/></g></svg>
<svg style="position:absolute;left:166.0px;top:983.8px;" width="12" height="12" viewBox="0 0 12 12"><path d="M12 0 V12 H0 Z" fill="#777777"/></svg>
<svg style="position:absolute;left:135.6px;top:1015.8px;overflow:visible;" width="32" height="32" viewBox="0 0 32 32"><defs><radialGradient id="dg" cx=".4" cy=".35" r=".7"><stop offset="0" stop-color="#c8d4d4"/><stop offset="1" stop-color="#5a6a6c"/></radialGradient></defs><path d="M21 21 L30 29" stroke="#9aa4a6" stroke-width="5" stroke-linecap="round"/><circle cx="13" cy="13" r="12.5" fill="url(#dg)"/></svg>
<svg style="position:absolute;left:166.0px;top:1042.8px;" width="12" height="12" viewBox="0 0 12 12"><path d="M12 0 V12 H0 Z" fill="#777777"/></svg>
<svg style="position:absolute;left:134.6px;top:1072.0px;overflow:visible;" width="34" height="34" viewBox="0 0 34 34"><path d="M2 26 L8 19 H26 L32 26 Z" fill="#e6a868"/><rect x="2" y="26" width="30" height="4" fill="#f0d0a0"/><rect x="2" y="30" width="30" height="2.5" fill="#c85a30"/><rect x="15" y="12" width="4" height="9" fill="#d0d0d0"/><path d="M10 2 H24 V9 C24 14 20 15 17 15 C14 15 10 14 10 9 Z" fill="#2a7ad0"/><ellipse cx="17" cy="2.5" rx="7" ry="2.2" fill="#5aa0e8"/></svg>
<svg style="position:absolute;left:133.6px;top:1128.0px;overflow:visible;" width="36" height="36" viewBox="0 0 36 36"><path d="M6 20 A12 12 0 0 1 22 6" fill="none" stroke="#c0cce0" stroke-width="3"/><path d="M0 17 L11 15 L6 25 Z" fill="#c0cce0"/><path d="M31 14 A12 12 0 0 1 22 30" fill="none" stroke="#a0b0c8" stroke-width="2.4" stroke-dasharray="3 2.4"/><path d="M24 11 L34 0.5 L36 2.5 L35 6 L27 14.5 Z" fill="#e0403c"/><path d="M25.5 10.5 L33.5 2 L34.8 3.2 L27 12 Z" fill="#f07a70"/><path d="M17.5 16 L24 10.5 L27.5 14.5 L21.5 20 Z" fill="#e0e0e0"/><path d="M18.5 16 L24 11.5 L25 12.5 L20 17.5 Z" fill="#ffffff"/><path d="M17.5 16 L21.5 20 C21.5 28 12 33 1 33.5 C5 31 5.5 28 7 24 C9 19 13 16 17.5 16 Z" fill="url(#bh)"/><path d="M5 32 C11 30 17 26 19.5 20" fill="none" stroke="#e0a870" stroke-width="1.1" opacity=".7"/></svg>
<svg style="position:absolute;left:140.6px;top:1190.5px;overflow:visible;" width="22" height="33" viewBox="0 0 22 33"><defs><linearGradient id="dr" x1="0" y1="0" x2="1" y2="1"><stop offset="0" stop-color="#e8f0f4"/><stop offset="1" stop-color="#9ab0bc"/></linearGradient></defs><path d="M11 0 C14 9 22 15 22 22 A11 11 0 0 1 0 22 C0 15 8 9 11 0 Z" fill="url(#dr)"/></svg>
<svg style="position:absolute;left:166.0px;top:1218.0px;" width="12" height="12" viewBox="0 0 12 12"><path d="M12 0 V12 H0 Z" fill="#777777"/></svg>
<svg style="position:absolute;left:134.6px;top:1247.0px;overflow:visible;" width="34" height="34" viewBox="0 0 34 34"><g transform="rotate(-40 17 17)"><rect x="-3" y="9" width="40" height="16" rx="8" fill="#e89a70"/><rect x="10" y="9" width="14" height="16" fill="#f4c8a8"/></g></svg>
<svg style="position:absolute;left:166.0px;top:1275.0px;" width="12" height="12" viewBox="0 0 12 12"><path d="M12 0 V12 H0 Z" fill="#777777"/></svg>
<svg style="position:absolute;left:133.6px;top:1304.0px;overflow:visible;" width="36" height="34" viewBox="0 0 36 34"><path d="M1 33 L5 14 L17 9 L26 18 L21 29 Z" fill="#f0c040"/><path d="M1 33 L5 14 L17 9 L14 20 Z" fill="#f8dc78"/><path d="M1 33 L13.5 20.5" stroke="#222" stroke-width="1.4"/><circle cx="14" cy="20" r="2.6" fill="#222"/><path d="M17 9 L22 4 L31 13 L26 18 Z" fill="#e8e8e8"/><path d="M19.5 6.5 L28.5 15.5" stroke="#222" stroke-width="2"/><path d="M22 4 L26 0 C30 0 34 4 35 9 L31 13 Z" fill="#7a2a1a"/></svg>
<svg style="position:absolute;left:166.0px;top:1332.0px;" width="12" height="12" viewBox="0 0 12 12"><path d="M12 0 V12 H0 Z" fill="#777777"/></svg>
<svg style="position:absolute;left:137.6px;top:1366.0px;overflow:visible;" width="28" height="28" viewBox="0 0 28 28"><defs><linearGradient id="rq" x1="0" y1="0" x2="0" y2="1"><stop offset="0" stop-color="#4a90dc"/><stop offset="1" stop-color="#3a78c4"/></linearGradient></defs><rect x="0" y="0" width="28" height="28" fill="url(#rq)"/></svg>
<svg style="position:absolute;left:166.0px;top:1391.0px;" width="12" height="12" viewBox="0 0 12 12"><path d="M12 0 V12 H0 Z" fill="#777777"/></svg>
<span style="position:absolute;left:135.6px;top:1414.7px;width:32px;text-align:center;font-family:'Liberation Serif',serif;font-size:40px;line-height:46px;color:#c8c8c8;">A</span>
<svg style="position:absolute;left:166.0px;top:1449.7px;" width="12" height="12" viewBox="0 0 12 12"><path d="M12 0 V12 H0 Z" fill="#777777"/></svg>
<svg style="position:absolute;left:134.1px;top:1479.5px;overflow:visible;" width="35" height="33" viewBox="0 0 35 33"><path d="M8 1 C16 3 24 1 31 1 C34 12 34 22 33 31 C24 30 12 33 1 31 C5 20 7 10 8 1 Z" fill="#20232e" stroke="#dcdcdc" stroke-width="1.5"/><g fill="none" stroke="#dcdcdc" stroke-width="1.3"><path d="M6 11 C15 13 24 11 33 11"/><path d="M4 21 C13 23 23 21 33.5 21"/><path d="M16 2.5 C15 12 13 22 11 32"/><path d="M24 1.5 C24.5 12 24 22 22 31.5"/></g></svg>
<svg style="position:absolute;left:166.0px;top:1507.0px;" width="12" height="12" viewBox="0 0 12 12"><path d="M12 0 V12 H0 Z" fill="#777777"/></svg>
<svg style="position:absolute;left:135.1px;top:1537.5px;overflow:visible;" width="33" height="33" viewBox="0 0 33 33"><path d="M21 21 L31 30" stroke="#c87a38" stroke-width="4.5" stroke-linecap="round"/><circle cx="13" cy="13" r="11.5" fill="#8ec0f0" stroke="#f0f0f0" stroke-width="2.6"/><ellipse cx="10" cy="9" rx="6" ry="4" fill="#c8e0fa" transform="rotate(-30 10 9)"/></svg>
<div style="position:absolute;left:1780.0px;top:282.0px;width:528.0px;height:43.6px;background:#2f2f2f;"></div><div style="position:absolute;left:1780.0px;top:324.1px;width:528.0px;height:1.5px;background:#262626;"></div><div style="position:absolute;left:1933.4px;top:286.0px;width:76.6px;height:39.6px;background:#404040;border-radius:2px 2px 0 0;"></div><div style="position:absolute;left:1794.0px;top:294.0px;width:2.0px;height:17.6px;background:#5a5a5a;"></div><div style="position:absolute;left:1799.5px;top:294.0px;width:2.0px;height:17.6px;background:#5a5a5a;"></div><span style="position:absolute;left:1824.4px;top:292.0px;font-size:21px;line-height:25px;color:#9a9a9a;white-space:nowrap;-webkit-text-stroke:0.4px #9a9a9a;letter-spacing:0.27px;">Histogram</span><span style="position:absolute;left:1940.0px;top:292.0px;font-size:21px;line-height:25px;color:#f2f2f2;white-space:nowrap;-webkit-text-stroke:0.4px #f2f2f2;letter-spacing:0.11px;-webkit-text-stroke:0.5px #f2f2f2;">Colour</span><span style="position:absolute;left:2020.0px;top:292.0px;font-size:21px;line-height:25px;color:#9a9a9a;white-space:nowrap;-webkit-text-stroke:0.4px #9a9a9a;letter-spacing:0.06px;">Swatches</span><span style="position:absolute;left:2130.0px;top:292.0px;font-size:21px;line-height:25px;color:#9a9a9a;white-space:nowrap;-webkit-text-stroke:0.4px #9a9a9a;">Brushes</span><div style="position:absolute;left:2121.2px;top:293.0px;width:1.6px;height:20.6px;background:#606060;"></div><svg style="position:absolute;left:2276.0px;top:296.0px;" width="26" height="18" viewBox="0 0 26 18"><g fill="#e4e4e4"><rect x="0" y="0" width="17" height="2"/><rect x="0" y="4.3" width="17" height="2"/><rect x="0" y="8.6" width="17" height="2"/><rect x="0" y="12.9" width="17" height="2"/><path d="M19 12 H26 L22.5 17.5 Z"/></g></svg>
<div style="position:absolute;left:1821.8px;top:365.5px;width:49px;height:49px;border-radius:50%;background:radial-gradient(circle at 60% 65%,#fff 55%,#e0e0e0 100%);box-shadow:0 0 0 2px #343434;"></div>
<div style="position:absolute;left:1800.3px;top:344.5px;width:51px;height:51px;border-radius:50%;background:#000;box-shadow:0 0 0 2px #3a3a3a,2px 4px 6px rgba(0,0,0,.55);"></div>
<svg style="position:absolute;left:1795.1px;top:398.2px;" width="23" height="23" viewBox="0 0 23 23"><circle cx="11.5" cy="11.5" r="10" fill="#fff" stroke="#2e2e2e" stroke-width="2"/><path d="M5 18 L18 5" stroke="#e8282e" stroke-width="2.2"/></svg>
<svg style="position:absolute;left:1852.0px;top:339.0px;" width="26" height="26" viewBox="0 0 26 26"><path d="M4 8 C13 6 19 12 20 21" fill="none" stroke="#dcdcdc" stroke-width="1.8"/><path d="M9.5 3 L3 8 L10 12" fill="none" stroke="#dcdcdc" stroke-width="1.8"/><path d="M15 16 L20.5 22 L24 15" fill="none" stroke="#dcdcdc" stroke-width="1.8"/></svg>
<svg style="position:absolute;left:1893.0px;top:343.0px;" width="34" height="34" viewBox="0 0 34 34"><path d="M2 31 L4 26 L19 11 L23 15 L8 30 Z" fill="#a8a8a8"/><path d="M4 27 L18 13 L20 15 L6 29 Z" fill="#555"/><path d="M17 9 L25 17 L22 19 L15 12 Z" fill="#b08a48"/><circle cx="26" cy="8" r="7" fill="#caa25a"/><circle cx="24.5" cy="6" r="3" fill="#dcb872"/></svg>
<div style="position:absolute;left:1930.4px;top:345px;width:28px;height:28px;border-radius:50%;background:#000;box-shadow:0 0 0 2px #353535;"></div>
<div style="position:absolute;left:2055.0px;top:352.0px;width:40.0px;height:44.0px;background:#373737;"></div>
<svg style="position:absolute;left:2066.0px;top:362.0px;" width="18" height="23" viewBox="0 0 18 23"><path d="M4 9 V6 A5 5 0 0 1 14 6 V9" fill="none" stroke="#b0b0b0" stroke-width="2.2"/><rect x="1.5" y="9" width="15" height="12.5" rx="1.6" fill="#b0b0b0"/></svg>
<div style="position:absolute;left:2102.5px;top:355px;width:183px;height:39px;background:#3d3d3d;border-radius:5px;box-shadow:inset 0 0 0 1.5px #2c2c2c,0 1px 0 rgba(255,255,255,.08);"></div>
<span style="position:absolute;left:2112.6px;top:362.0px;font-size:21px;line-height:25px;color:#ececec;white-space:nowrap;-webkit-text-stroke:0.4px #ececec;letter-spacing:-0.06px;">Greyscale</span>
<svg style="position:absolute;left:2265.0px;top:365.0px;" width="9" height="20" viewBox="0 0 9 20"><path d="M0 6 H8 L4 0 Z M0 14 H8 L4 20 Z" fill="#d0d0d0"/></svg>
<span style="position:absolute;left:1794.8px;top:443.0px;font-size:21px;line-height:25px;color:#e4e4e4;white-space:nowrap;-webkit-text-stroke:0.4px #e4e4e4;letter-spacing:-0.63px;">Grey</span>
<div style="position:absolute;left:1861px;top:444px;width:351.6px;height:18.6px;border-radius:9.3px;background:linear-gradient(90deg,#000 3%,#fff 96%);box-shadow:0 1px 0 rgba(255,255,255,.18),0 0 0 1px rgba(0,0,0,.25);"></div>
<svg style="position:absolute;left:1860.8px;top:441.8px;" width="22" height="22" viewBox="0 0 22 22"><circle cx="11" cy="11" r="8.6" fill="#000" stroke="#fff" stroke-width="3.4"/></svg>
<div style="position:absolute;left:2222px;top:434.4px;width:71.5px;height:37.6px;background:#2d2d2d;border-radius:5px;box-shadow:inset 0 0 0 1.5px #252525,0 1px 0 rgba(255,255,255,.10);"></div>
<span style="position:absolute;left:2228.5px;top:442.0px;font-size:21px;line-height:25px;color:#ececec;white-space:nowrap;-webkit-text-stroke:0.4px #ececec;">0</span>
<svg style="position:absolute;left:1796.0px;top:484.5px;" width="496" height="175" viewBox="0 0 496 175"><defs><linearGradient id="cb" x1="0" y1="0" x2="0" y2="1"><stop offset="0" stop-color="#fff"/><stop offset=".06" stop-color="#fafafa"/><stop offset=".42" stop-color="#ececec"/><stop offset=".53" stop-color="#d2d2d2"/><stop offset=".63" stop-color="#9c9c9c"/><stop offset=".73" stop-color="#5a5a5a"/><stop offset=".83" stop-color="#222"/><stop offset=".93" stop-color="#000"/></linearGradient>
<linearGradient id="cl" x1="0" y1="0" x2="1" y2="0"><stop offset="0" stop-color="#000" stop-opacity=".0"/><stop offset="1" stop-color="#000" stop-opacity="0"/></linearGradient>
<filter id="cf" x="-30%" y="-30%" width="160%" height="160%"><feGaussianBlur stdDeviation="16"/></filter>
<linearGradient id="cfade" x1="0" y1="0" x2="0" y2="1"><stop offset="0" stop-color="#fff"/><stop offset=".12" stop-color="#fff" stop-opacity="0"/></linearGradient>
<clipPath id="cc"><rect x="0" y="0" width="496" height="175"/></clipPath></defs>
<g clip-path="url(#cc)"><rect width="496" height="175" fill="url(#cb)"/>
<g filter="url(#cf)"><rect x="-30" y="40" width="105" height="90" fill="#000" opacity=".3"/><rect x="275" y="28" width="260" height="80" fill="#000" opacity=".34"/><ellipse cx="352" cy="115" rx="52" ry="60" fill="#000" opacity=".82"/><rect x="300" y="120" width="230" height="40" fill="#000" opacity=".35"/></g>
<rect width="496" height="175" fill="url(#cfade)"/><rect x="0" y="160" width="496" height="15" fill="#000" opacity=".8" filter="url(#cf)"/></g>
<rect x=".75" y=".75" width="494.5" height="173.5" fill="none" stroke="#0c0c0c" stroke-width="1.5"/></svg>
<span style="position:absolute;left:1796.4px;top:667.0px;font-size:21px;line-height:25px;color:#e4e4e4;white-space:nowrap;-webkit-text-stroke:0.4px #e4e4e4;letter-spacing:0.19px;">Opacity</span>
<div style="position:absolute;left:1798px;top:701px;width:26px;height:26px;border-radius:50%;background:#000;"></div>
<div style="position:absolute;left:1836.7px;top:704px;width:319.3px;height:18.6px;border-radius:9.3px;background:linear-gradient(90deg,rgba(0,0,0,0) 0%,rgba(0,0,0,.92) 100%),repeating-conic-gradient(#fff 0 25%,#c4c4c4 0 50%) 0 0/16px 16px;box-shadow:0 1px 0 rgba(255,255,255,.18),0 0 0 1px rgba(0,0,0,.25);"></div>
<svg style="position:absolute;left:2134.8px;top:702.0px;" width="22" height="22" viewBox="0 0 22 22"><circle cx="11" cy="11" r="8.6" fill="#222" stroke="#fff" stroke-width="3.4"/></svg>
<div style="position:absolute;left:2176.5px;top:692.8px;width:120.5px;height:40.2px;background:#2d2d2d;border-radius:5px;box-shadow:inset 0 0 0 1.5px #252525,0 1px 0 rgba(255,255,255,.10);"></div>
<div style="position:absolute;left:2262.8px;top:694px;width:33px;height:38px;background:#383838;border-radius:0 4px 4px 0;box-shadow:-1.5px 0 0 #262626;"></div>
<span style="position:absolute;left:2183.0px;top:702.0px;font-size:21px;line-height:25px;color:#ececec;white-space:nowrap;-webkit-text-stroke:0.4px #ececec;letter-spacing:-0.11px;">100 %</span>
<svg style="position:absolute;left:2274.0px;top:709.0px;" width="13" height="10" viewBox="0 0 13 10"><path d="M0 0 H13 L6.5 10 Z" fill="#d4d4d4"/></svg>
<div style="position:absolute;left:1780.0px;top:745.4px;width:528.0px;height:4.2px;background:#2c2c2c;"></div>
<div style="position:absolute;left:1780.0px;top:749.6px;width:528.0px;height:43.8px;background:#2f2f2f;"></div><div style="position:absolute;left:1780.0px;top:791.9px;width:528.0px;height:1.5px;background:#262626;"></div><div style="position:absolute;left:1943.6px;top:753.6px;width:76.7px;height:39.8px;background:#404040;border-radius:2px 2px 0 0;"></div><div style="position:absolute;left:1794.0px;top:761.6px;width:2.0px;height:17.8px;background:#5a5a5a;"></div><div style="position:absolute;left:1799.5px;top:761.6px;width:2.0px;height:17.8px;background:#5a5a5a;"></div><span style="position:absolute;left:1824.4px;top:760.0px;font-size:21px;line-height:25px;color:#9a9a9a;white-space:nowrap;-webkit-text-stroke:0.4px #9a9a9a;letter-spacing:0.35px;">Adjustment</span><span style="position:absolute;left:1950.4px;top:760.0px;font-size:21px;line-height:25px;color:#f2f2f2;white-space:nowrap;-webkit-text-stroke:0.4px #f2f2f2;letter-spacing:-0.24px;-webkit-text-stroke:0.5px #f2f2f2;">Layers</span><span style="position:absolute;left:2030.0px;top:760.0px;font-size:21px;line-height:25px;color:#9a9a9a;white-space:nowrap;-webkit-text-stroke:0.4px #9a9a9a;letter-spacing:0.46px;">Effects</span><span style="position:absolute;left:2114.0px;top:760.0px;font-size:21px;line-height:25px;color:#9a9a9a;white-space:nowrap;-webkit-text-stroke:0.4px #9a9a9a;letter-spacing:0.20px;">Styles</span><span style="position:absolute;left:2190.0px;top:760.0px;font-size:21px;line-height:25px;color:#9a9a9a;white-space:nowrap;-webkit-text-stroke:0.4px #9a9a9a;letter-spacing:0.30px;">Stock</span><div style="position:absolute;left:2105.0px;top:760.6px;width:1.6px;height:20.8px;background:#606060;"></div><div style="position:absolute;left:2181.2px;top:760.6px;width:1.6px;height:20.8px;background:#606060;"></div><svg style="position:absolute;left:2276.0px;top:763.6px;" width="26" height="18" viewBox="0 0 26 18"><g fill="#e4e4e4"><rect x="0" y="0" width="17" height="2"/><rect x="0" y="4.3" width="17" height="2"/><rect x="0" y="8.6" width="17" height="2"/><rect x="0" y="12.9" width="17" height="2"/><path d="M19 12 H26 L22.5 17.5 Z"/></g></svg>
<div style="position:absolute;left:1780.0px;top:793.4px;width:528.0px;height:58.9px;background:#404040;"></div>
<span style="position:absolute;left:1790.7px;top:810.0px;font-size:21px;line-height:25px;color:#e4e4e4;white-space:nowrap;-webkit-text-stroke:0.4px #e4e4e4;letter-spacing:0.25px;">Opacity:</span>
<div style="position:absolute;left:1900.6px;top:805px;width:96.4px;height:40.5px;background:#2d2d2d;border-radius:5px;box-shadow:inset 0 0 0 1.5px #252525,0 1px 0 rgba(255,255,255,.10);"></div>
<span style="position:absolute;left:1906.6px;top:814.0px;font-size:21px;line-height:25px;color:#ececec;white-space:nowrap;-webkit-text-stroke:0.4px #ececec;letter-spacing:-0.11px;">100 %</span>
<svg style="position:absolute;left:1979.0px;top:821.0px;" width="12" height="9" viewBox="0 0 12 9"><path d="M0 0 H12 L6 9 Z" fill="#d4d4d4"/></svg>
<div style="position:absolute;left:2002.5px;top:805px;width:217px;height:39px;background:#3d3d3d;border-radius:5px;box-shadow:inset 0 0 0 1.5px #2c2c2c,0 1px 0 rgba(255,255,255,.08);"></div>
<span style="position:absolute;left:2012.0px;top:812.0px;font-size:21px;line-height:25px;color:#ececec;white-space:nowrap;-webkit-text-stroke:0.4px #ececec;letter-spacing:0.15px;">Normal</span>
<svg style="position:absolute;left:2198.5px;top:814.0px;" width="9" height="20" viewBox="0 0 9 20"><path d="M0 6 H8 L4 0 Z M0 14 H8 L4 20 Z" fill="#d0d0d0"/></svg>
<svg style="position:absolute;left:2227.0px;top:811.4px;" width="26" height="26" viewBox="0 0 26 26"><g transform="translate(13 13)" fill="#c4c4c4"><rect x="-2.6" y="-12" width="5.2" height="6" transform="rotate(0)"/><rect x="-2.6" y="-12" width="5.2" height="6" transform="rotate(45)"/><rect x="-2.6" y="-12" width="5.2" height="6" transform="rotate(90)"/><rect x="-2.6" y="-12" width="5.2" height="6" transform="rotate(135)"/><rect x="-2.6" y="-12" width="5.2" height="6" transform="rotate(180)"/><rect x="-2.6" y="-12" width="5.2" height="6" transform="rotate(225)"/><rect x="-2.6" y="-12" width="5.2" height="6" transform="rotate(270)"/><rect x="-2.6" y="-12" width="5.2" height="6" transform="rotate(315)"/><circle r="8.6"/><circle r="3.6" fill="#404040"/></g></svg>
<svg style="position:absolute;left:2269.7px;top:812.0px;" width="18" height="23" viewBox="0 0 18 23"><path d="M4 9 V6 A5 5 0 0 1 14 6 V9" fill="none" stroke="#b4b4b4" stroke-width="2.2"/><rect x="1.5" y="9" width="15" height="12.5" rx="1.6" fill="#b4b4b4"/></svg>
<div style="position:absolute;left:1780.0px;top:852.3px;width:498.0px;height:628.7px;background:#2e2e2e;"></div>
<div style="position:absolute;left:2278.0px;top:852.3px;width:30.0px;height:628.7px;background:#343434;"></div>
<div style="position:absolute;left:1780.0px;top:851.3px;width:528.0px;height:1.5px;background:#2a2a2a;"></div>
<div style="position:absolute;left:1780.0px;top:852.8px;width:498.0px;height:127.8px;background:#363636;"></div>
<div style="position:absolute;left:1780.0px;top:852.8px;width:478.0px;height:127.8px;background:#3b3d43;"></div>
<div style="position:absolute;left:1923.8px;top:916.0px;width:334.2px;height:64.0px;background:#607ca7;"></div>
<svg style="position:absolute;left:1787.0px;top:872.0px;" width="30" height="30" viewBox="0 0 30 30"><circle cx="15" cy="15" r="13.6" fill="none" stroke="#d4d4d4" stroke-width="1.7"/><path d="M7.5 10 H22.5 L15 22 Z" fill="#c4c4c4"/></svg>
<div style="position:absolute;left:1822.5px;top:856.5px;width:59.5px;height:58.9px;background:#ffffff;box-shadow:inset 0 0 0 2px #0a0a0a;"></div>
<svg style="position:absolute;left:1849.5px;top:883.5px;" width="30" height="30" viewBox="0 0 30 30"><circle cx="15" cy="15" r="13" fill="#2c2c2c" stroke="#3a3a3a" stroke-width="2"/><path d="M6.5 20.5 A10.2 10.2 0 0 0 24.5 11 Z" fill="#fff"/></svg>
<span style="position:absolute;left:1893.0px;top:871.0px;font-size:21px;line-height:25px;color:#a8a8a8;white-space:nowrap;-webkit-text-stroke:0.4px #a8a8a8;letter-spacing:0.33px;">(HSL Shift Adjustment)</span>
<div style="position:absolute;left:2215.8px;top:872px;width:26px;height:26px;background:linear-gradient(#444444,#2b2b2b);border-radius:6.5px;box-shadow:inset 0 0 0 2px #1b1b1b,0 1px 0 rgba(255,255,255,.10);"></div><svg style="position:absolute;left:2219.8px;top:876.0px;" width="18" height="18" viewBox="0 0 18 18"><path d="M2.5 10 L7 15 L15.5 2.5" fill="none" stroke="#f4f4f4" stroke-width="2.3"/></svg>
<div style="position:absolute;left:1860.5px;top:916.7px;width:63.3px;height:63.1px;background:#ffffff;box-shadow:inset 0 0 0 1.5px #fff;"></div>
<div style="position:absolute;left:1863.0px;top:919.2px;width:58.3px;height:58.1px;background:#0a0a0a;"></div>
<svg style="position:absolute;left:1864.7px;top:921.0px;" width="55" height="54.6" viewBox="0 0 889 883"><defs><radialGradient id="mg" gradientUnits="userSpaceOnUse" cx="425" cy="279" r="530"><stop offset="0.0" stop-color="#121212"/><stop offset="0.1698" stop-color="#0c0c0c"/><stop offset="0.2415" stop-color="#020202"/><stop offset="0.2679" stop-color="#000"/><stop offset="0.2868" stop-color="#101010"/><stop offset="0.3113" stop-color="#262626"/><stop offset="0.3396" stop-color="#383838"/><stop offset="0.3849" stop-color="#525252"/><stop offset="0.4415" stop-color="#787878"/><stop offset="0.4679" stop-color="#8a8a8a"/><stop offset="0.5283" stop-color="#b0b0b0"/><stop offset="0.5528" stop-color="#c0c0c0"/><stop offset="0.6358" stop-color="#dedede"/><stop offset="0.7321" stop-color="#f0f0f0"/><stop offset="0.8283" stop-color="#fafafa"/><stop offset="0.9434" stop-color="#fefefe"/><stop offset="1.0" stop-color="#ffffff"/></radialGradient><filter id="mb7" x="-50%" y="-50%" width="200%" height="200%"><feGaussianBlur stdDeviation="7"/></filter><filter id="mb9" x="-50%" y="-50%" width="200%" height="200%"><feGaussianBlur stdDeviation="10"/></filter><filter id="mb14" x="-50%" y="-50%" width="200%" height="200%"><feGaussianBlur stdDeviation="14"/></filter><filter id="mb5" x="-50%" y="-50%" width="200%" height="200%"><feGaussianBlur stdDeviation="5"/></filter><clipPath id="mc"><rect x="0" y="0" width="889" height="1110"/></clipPath></defs><g clip-path="url(#mc)"><rect x="0" y="0" width="889" height="1110" fill="#fff"/><circle cx="425" cy="279" r="530" fill="url(#mg)"/><circle cx="604.5" cy="135" r="50" fill="#000" opacity="0.10"/><circle cx="604.5" cy="135" r="42" fill="#000" opacity="0.08"/><circle cx="604.5" cy="135" r="29" fill="#000" filter="url(#mb5)"/><g filter="url(#mb9)" opacity="0.72" stroke="#000" stroke-linecap="round" fill="none"><path d="M208 233 L209 235" stroke-width="36"/><path d="M202 290 L203 292" stroke-width="36"/><path d="M425 486 L437 518" stroke-width="34"/><path d="M480 466 L520 446" stroke-width="34"/></g><g filter="url(#mb14)" stroke="#000" fill="#000" stroke-linecap="round" opacity="0.42"><ellipse cx="682.5" cy="366" rx="33.0" ry="88.0" stroke="none" transform="rotate(-1.5 682.5 366)"/><path d="M755 359 L720 407" stroke-width="60" fill="none"/><path d="M790.6 376.5 L746.5 429.5" stroke-width="60" fill="none"/><path d="M701 458 L712.5 458" stroke-width="56" fill="none"/><path d="M799 469 L676 522" stroke-width="72" fill="none"/><path d="M839 513 L764 548.5" stroke-width="60" fill="none"/><path d="M758 541 L651 601.5" stroke-width="66" fill="none"/><path d="M817 597 L751 636.7" stroke-width="60" fill="none"/><path d="M733 592.6 L630 684" stroke-width="66" fill="none"/><path d="M790.6 678.6 L755 694" stroke-width="58" fill="none"/><path d="M720 676.4 L667 711.7" stroke-width="62" fill="none"/><path d="M740 702 L672 758" stroke-width="94" fill="none"/><path d="M751 733.7 L606 775.6" stroke-width="66" fill="none"/><path d="M751 773.4 L664 800" stroke-width="62" fill="none"/><path d="M711 817.5 L600 905" stroke-width="72" fill="none"/><path d="M690 835 L603 908" stroke-width="76" fill="none"/><path d="M612 896 L510 979" stroke-width="64" fill="none"/></g><g filter="url(#mb7)" stroke="#000" fill="#000" stroke-linecap="round" opacity="1"><ellipse cx="682.5" cy="366" rx="25.0" ry="80.0" stroke="none" transform="rotate(-1.5 682.5 366)"/><path d="M755 359 L720 407" stroke-width="44" fill="none"/><path d="M790.6 376.5 L746.5 429.5" stroke-width="44" fill="none"/><path d="M701 458 L712.5 458" stroke-width="40" fill="none"/><path d="M799 469 L676 522" stroke-width="56" fill="none"/><path d="M839 513 L764 548.5" stroke-width="44" fill="none"/><path d="M758 541 L651 601.5" stroke-width="50" fill="none"/><path d="M817 597 L751 636.7" stroke-width="44" fill="none"/><path d="M733 592.6 L630 684" stroke-width="50" fill="none"/><path d="M790.6 678.6 L755 694" stroke-width="42" fill="none"/><path d="M720 676.4 L667 711.7" stroke-width="46" fill="none"/><path d="M740 702 L672 758" stroke-width="78" fill="none"/><path d="M751 733.7 L606 775.6" stroke-width="50" fill="none"/><path d="M751 773.4 L664 800" stroke-width="46" fill="none"/><path d="M711 817.5 L600 905" stroke-width="56" fill="none"/><path d="M690 835 L603 908" stroke-width="60" fill="none"/><path d="M612 896 L510 979" stroke-width="48" fill="none"/></g><circle cx="776" cy="750" r="16" fill="#000" opacity="0.55" filter="url(#mb7)"/></g></svg>
<div style="position:absolute;left:1890px;top:946px;width:29px;height:29px;background:repeating-conic-gradient(#fff 0 25%,#d8d8d8 0 50%) 0 0/8px 8px;"></div>
<div style="position:absolute;left:1894px;top:950px;width:21px;height:21px;border-radius:50%;background:#8c8c8c;"></div>
<span style="position:absolute;left:1933.0px;top:935.0px;font-size:21px;line-height:25px;color:#b4c0d4;white-space:nowrap;-webkit-text-stroke:0.4px #b4c0d4;letter-spacing:-0.03px;">(Mask)</span>
<div style="position:absolute;left:2215.8px;top:934px;width:26px;height:26px;background:linear-gradient(#444444,#2b2b2b);border-radius:6.5px;box-shadow:inset 0 0 0 2px #1b1b1b,0 1px 0 rgba(255,255,255,.10);"></div><svg style="position:absolute;left:2219.8px;top:938.0px;" width="18" height="18" viewBox="0 0 18 18"><path d="M2.5 10 L7 15 L15.5 2.5" fill="none" stroke="#f4f4f4" stroke-width="2.3"/></svg>
<div style="position:absolute;left:1780.0px;top:980.6px;width:498.0px;height:1.4px;background:#2a2a2a;"></div>
<div style="position:absolute;left:1780.0px;top:982.0px;width:498.0px;height:64.0px;background:#3a3a3a;"></div>
<div style="position:absolute;left:1780.0px;top:1046.0px;width:498.0px;height:1.5px;background:#2a2a2a;"></div>
<svg style="position:absolute;left:1821.5px;top:983.8px;" width="60" height="59.5" viewBox="0 0 60 59"><defs><radialGradient id="bg1" cx=".3" cy=".8" r=".75"><stop offset="0" stop-color="#3a9436"/><stop offset=".5" stop-color="#1f6422"/><stop offset="1" stop-color="#0c2a0e"/></radialGradient><filter id="bgf"><feGaussianBlur stdDeviation="1.3"/></filter><clipPath id="bgc"><rect x="7" y="2" width="45" height="55"/></clipPath></defs>
<rect width="60" height="59" fill="#060606"/><rect x="2" y="2" width="56" height="55" fill="#2c2c2c"/><rect x="7" y="2" width="45" height="55" fill="url(#bg1)"/>
<g filter="url(#bgf)" clip-path="url(#bgc)"><ellipse cx="24" cy="13" rx="12" ry="7" fill="#4a3a14"/><ellipse cx="30" cy="9" rx="9" ry="5" fill="#3a3010"/><ellipse cx="30" cy="20" rx="5" ry="5.5" fill="#d07838"/><ellipse cx="26" cy="17" rx="5" ry="4" fill="#8a5a20"/><path d="M35 14 L52 16 L52 57 L30 57 L33 44 L38 34 Z" fill="#050805"/><path d="M34 22 L40 18 L44 30 L36 34 Z" fill="#0a0f0a"/><path d="M7 52 L30 47 L36 57 L7 57 Z" fill="#0c240e"/></g></svg>
<span style="position:absolute;left:1893.0px;top:999.0px;font-size:21px;line-height:25px;color:#ffffff;white-space:nowrap;font-weight:700;letter-spacing:-0.20px;">Background</span>
<span style="position:absolute;left:2020.8px;top:999.0px;font-size:21px;line-height:25px;color:#b0b0b0;white-space:nowrap;-webkit-text-stroke:0.4px #b0b0b0;letter-spacing:-0.07px;">(Pixel)</span>
<svg style="position:absolute;left:2183.0px;top:1001.0px;" width="18" height="23" viewBox="0 0 18 23"><path d="M4 9 V6 A5 5 0 0 1 14 6 V9" fill="none" stroke="#b4b4b4" stroke-width="2.2"/><rect x="1.5" y="9" width="15" height="12.5" rx="1.6" fill="#b4b4b4"/></svg>
<div style="position:absolute;left:2215.8px;top:1000px;width:26px;height:26px;background:linear-gradient(#444444,#2b2b2b);border-radius:6.5px;box-shadow:inset 0 0 0 2px #1b1b1b,0 1px 0 rgba(255,255,255,.10);"></div><svg style="position:absolute;left:2219.8px;top:1004.0px;" width="18" height="18" viewBox="0 0 18 18"><path d="M2.5 10 L7 15 L15.5 2.5" fill="none" stroke="#f4f4f4" stroke-width="2.3"/></svg>
<div style="position:absolute;left:1780.0px;top:1481.0px;width:528.0px;height:45.4px;background:#444444;"></div>
<div style="position:absolute;left:1780.0px;top:1480.0px;width:528.0px;height:1.5px;background:#2a2a2a;"></div>
<div style="position:absolute;left:1780.0px;top:1526.4px;width:528.0px;height:4.6px;background:#2c2c2c;"></div>
<div style="position:absolute;left:1789.0px;top:1484.0px;width:42.0px;height:39.0px;background:#393939;"></div>
<svg style="position:absolute;left:1793.0px;top:1490.0px;" width="34" height="28" viewBox="0 0 34 28"><path d="M1 3 L17 11 L33 3 M1 11 L17 19 L33 11 M1 19 L17 27 L33 19" fill="none" stroke="#b8b8b8" stroke-width="2.6"/><path d="M1 3 L17 11 L33 3 L33 6 L17 14 L1 6 Z" fill="#b8b8b8" opacity=".55"/></svg>
<svg style="position:absolute;left:1946.0px;top:1492.0px;" width="29" height="24" viewBox="0 0 29 24"><rect width="29" height="24" fill="#b8b8b8"/><circle cx="14.5" cy="12" r="8" fill="#444"/></svg>
<svg style="position:absolute;left:1994.0px;top:1491.8px;" width="25" height="25" viewBox="0 0 25 25"><circle cx="12.5" cy="12.5" r="11" fill="none" stroke="#b8b8b8" stroke-width="2"/><path d="M5 20.5 A11 11 0 0 0 20.5 5 Z" fill="#b8b8b8"/></svg>
<span style="position:absolute;left:2033px;top:1484px;font-family:'Liberation Serif',serif;font-style:italic;font-size:32px;line-height:36px;color:#b8b8b8;letter-spacing:-1px;">fx</span>
<svg style="position:absolute;left:2079.0px;top:1492.0px;" width="21" height="24" viewBox="0 0 21 24"><path d="M0 0 H21 L13.5 12 L21 24 H0 L7.5 12 Z" fill="#b8b8b8"/></svg>
<svg style="position:absolute;left:2176.5px;top:1492.0px;" width="27" height="22" viewBox="0 0 27 22"><path d="M0 2 H9 L12 5 H27 V22 H0 Z" fill="#b8b8b8"/></svg>
<div style="position:absolute;left:2225.8px;top:1492px;width:21px;height:24px;background:repeating-conic-gradient(#b8b8b8 0 25%,#5a5a5a 0 50%) 0 0/10.5px 12px;box-shadow:inset 0 0 0 1.5px #b8b8b8;"></div>
<svg style="position:absolute;left:2272.0px;top:1490.0px;" width="19" height="27" viewBox="0 0 19 27"><rect x="0" y="4" width="19" height="3.4" fill="#b8b8b8"/><rect x="6" y="0" width="7" height="4" rx="1" fill="#b8b8b8"/><path d="M2 9 H17 L16 27 H3 Z" fill="#b8b8b8"/><path d="M6.3 12 V24 M9.5 12 V24 M12.7 12 V24" stroke="#444" stroke-width="1.4"/></svg>
<div style="position:absolute;left:1780.0px;top:1531.0px;width:528.0px;height:42.6px;background:#2f2f2f;"></div><div style="position:absolute;left:1780.0px;top:1572.1px;width:528.0px;height:1.5px;background:#262626;"></div><div style="position:absolute;left:1817.5px;top:1535.0px;width:106.5px;height:38.6px;background:#404040;border-radius:2px 2px 0 0;"></div><div style="position:absolute;left:1794.0px;top:1543.0px;width:2.0px;height:16.6px;background:#5a5a5a;"></div><div style="position:absolute;left:1799.5px;top:1543.0px;width:2.0px;height:16.6px;background:#5a5a5a;"></div><span style="position:absolute;left:1824.4px;top:1540.0px;font-size:21px;line-height:25px;color:#f2f2f2;white-space:nowrap;-webkit-text-stroke:0.4px #f2f2f2;letter-spacing:0.21px;-webkit-text-stroke:0.5px #f2f2f2;">Navigator</span><span style="position:absolute;left:1935.0px;top:1540.0px;font-size:21px;line-height:25px;color:#9a9a9a;white-space:nowrap;-webkit-text-stroke:0.4px #9a9a9a;letter-spacing:0.04px;">Transform</span><span style="position:absolute;left:2048.2px;top:1540.0px;font-size:21px;line-height:25px;color:#9a9a9a;white-space:nowrap;-webkit-text-stroke:0.4px #9a9a9a;letter-spacing:0.35px;">History</span><span style="position:absolute;left:2134.0px;top:1540.0px;font-size:21px;line-height:25px;color:#9a9a9a;white-space:nowrap;-webkit-text-stroke:0.4px #9a9a9a;letter-spacing:-0.02px;">Channels</span><div style="position:absolute;left:2038.9px;top:1542.0px;width:1.6px;height:19.6px;background:#606060;"></div><div style="position:absolute;left:2125.2px;top:1542.0px;width:1.6px;height:19.6px;background:#606060;"></div><svg style="position:absolute;left:2276.0px;top:1545.0px;" width="26" height="18" viewBox="0 0 26 18"><g fill="#e4e4e4"><rect x="0" y="0" width="17" height="2"/><rect x="0" y="4.3" width="17" height="2"/><rect x="0" y="8.6" width="17" height="2"/><rect x="0" y="12.9" width="17" height="2"/><path d="M19 12 H26 L22.5 17.5 Z"/></g></svg>
<div style="position:absolute;left:1780.0px;top:1573.6px;width:528.0px;height:72.4px;background:#404040;"></div>
<span style="position:absolute;left:1796.8px;top:1594.0px;font-size:21px;line-height:25px;color:#e4e4e4;white-space:nowrap;-webkit-text-stroke:0.4px #e4e4e4;letter-spacing:-0.10px;">Zoom:</span>
<svg style="position:absolute;left:1873.9px;top:1596.3px;" width="30" height="30" viewBox="0 0 30 30"><circle cx="15" cy="15" r="13.4" fill="none" stroke="#ececec" stroke-width="2"/><path d="M7.5 15 H22.5" stroke="#ececec" stroke-width="2.2"/></svg>
<svg style="position:absolute;left:2262.0px;top:1596.3px;" width="30" height="30" viewBox="0 0 30 30"><circle cx="15" cy="15" r="13.4" fill="none" stroke="#ececec" stroke-width="2"/><path d="M7.5 15 H22.5 M15 7.5 V22.5" stroke="#ececec" stroke-width="2.2"/></svg>
<div style="position:absolute;left:1917px;top:1603.4px;width:240.6px;height:8px;border-radius:4px;background:#333333;box-shadow:inset 0 1px 1px rgba(0,0,0,.4),0 1px 0 rgba(255,255,255,.10);"></div>
<div style="position:absolute;left:1917px;top:1603.4px;width:26px;height:8px;border-radius:4px 0 0 4px;background:#5d7fae;"></div>
<svg style="position:absolute;left:1935.5px;top:1599.0px;" width="19" height="19.5" viewBox="0 0 19 19.5"><defs><linearGradient id="zt" x1="0" y1="0" x2="0" y2="1"><stop offset="0" stop-color="#ffffff"/><stop offset="1" stop-color="#cfcfcf"/></linearGradient></defs><path d="M0.5 1.5 Q0.5 .5 1.5 .5 H17.5 Q18.5 .5 18.5 1.5 V11 L9.5 19 L.5 11 Z" fill="url(#zt)" stroke="#2a2a2a" stroke-width=".8"/></svg>
<div style="position:absolute;left:1938.2px;top:1622.5px;width:1.6px;height:6.0px;background:#8a8a8a;"></div>
<div style="position:absolute;left:1964.2px;top:1622.5px;width:1.6px;height:6.0px;background:#8a8a8a;"></div>
<div style="position:absolute;left:2000.2px;top:1622.5px;width:1.6px;height:6.0px;background:#8a8a8a;"></div>
<div style="position:absolute;left:2012.2px;top:1622.5px;width:1.6px;height:6.0px;background:#8a8a8a;"></div>
<div style="position:absolute;left:2038.0px;top:1622.5px;width:1.6px;height:6.0px;background:#8a8a8a;"></div>
<div style="position:absolute;left:2062.2px;top:1622.5px;width:1.6px;height:6.0px;background:#8a8a8a;"></div>
<div style="position:absolute;left:2096.2px;top:1622.5px;width:1.6px;height:6.0px;background:#8a8a8a;"></div>
<div style="position:absolute;left:2108.1px;top:1622.5px;width:1.6px;height:6.0px;background:#8a8a8a;"></div>
<div style="position:absolute;left:2122.2px;top:1622.5px;width:1.6px;height:6.0px;background:#8a8a8a;"></div>
<div style="position:absolute;left:2170px;top:1592.4px;width:82px;height:37.6px;background:#2d2d2d;border-radius:5px;box-shadow:inset 0 0 0 1.5px #252525,0 1px 0 rgba(255,255,255,.10);"></div>
<span style="position:absolute;left:2176.5px;top:1599.0px;font-size:21px;line-height:25px;color:#ececec;white-space:nowrap;-webkit-text-stroke:0.4px #ececec;letter-spacing:0.03px;">25 %</span>
<div style="position:absolute;left:1780.0px;top:1645.0px;width:528.0px;height:2.0px;background:#2a2a2a;"></div>
<div style="position:absolute;left:1780.0px;top:1647.0px;width:528.0px;height:311.0px;background:#404040;"></div>
<div style="position:absolute;left:1929.7px;top:1660px;width:228.8px;height:286px;box-shadow:0 1px 4px rgba(0,0,0,.5);"></div>
<svg style="position:absolute;left:1929.7px;top:1660.0px;" width="228.8" height="286" viewBox="0 0 889 1110"><defs><radialGradient id="ng" gradientUnits="userSpaceOnUse" cx="425" cy="279" r="530"><stop offset="0.0" stop-color="#121212"/><stop offset="0.1698" stop-color="#0c0c0c"/><stop offset="0.2415" stop-color="#020202"/><stop offset="0.2679" stop-color="#000"/><stop offset="0.2868" stop-color="#101010"/><stop offset="0.3113" stop-color="#262626"/><stop offset="0.3396" stop-color="#383838"/><stop offset="0.3849" stop-color="#525252"/><stop offset="0.4415" stop-color="#787878"/><stop offset="0.4679" stop-color="#8a8a8a"/><stop offset="0.5283" stop-color="#b0b0b0"/><stop offset="0.5528" stop-color="#c0c0c0"/><stop offset="0.6358" stop-color="#dedede"/><stop offset="0.7321" stop-color="#f0f0f0"/><stop offset="0.8283" stop-color="#fafafa"/><stop offset="0.9434" stop-color="#fefefe"/><stop offset="1.0" stop-color="#ffffff"/></radialGradient><filter id="nb7" x="-50%" y="-50%" width="200%" height="200%"><feGaussianBlur stdDeviation="7"/></filter><filter id="nb9" x="-50%" y="-50%" width="200%" height="200%"><feGaussianBlur stdDeviation="10"/></filter><filter id="nb14" x="-50%" y="-50%" width="200%" height="200%"><feGaussianBlur stdDeviation="14"/></filter><filter id="nb5" x="-50%" y="-50%" width="200%" height="200%"><feGaussianBlur stdDeviation="5"/></filter><clipPath id="nc"><rect x="0" y="0" width="889" height="1110"/></clipPath></defs><g clip-path="url(#nc)"><rect x="0" y="0" width="889" height="1110" fill="#fff"/><circle cx="425" cy="279" r="530" fill="url(#ng)"/><circle cx="604.5" cy="135" r="50" fill="#000" opacity="0.10"/><circle cx="604.5" cy="135" r="42" fill="#000" opacity="0.08"/><circle cx="604.5" cy="135" r="29" fill="#000" filter="url(#nb5)"/><g filter="url(#nb9)" opacity="0.72" stroke="#000" stroke-linecap="round" fill="none"><path d="M208 233 L209 235" stroke-width="36"/><path d="M202 290 L203 292" stroke-width="36"/><path d="M425 486 L437 518" stroke-width="34"/><path d="M480 466 L520 446" stroke-width="34"/></g><g filter="url(#nb14)" stroke="#000" fill="#000" stroke-linecap="round" opacity="0.42"><ellipse cx="682.5" cy="366" rx="33.0" ry="88.0" stroke="none" transform="rotate(-1.5 682.5 366)"/><path d="M755 359 L720 407" stroke-width="60" fill="none"/><path d="M790.6 376.5 L746.5 429.5" stroke-width="60" fill="none"/><path d="M701 458 L712.5 458" stroke-width="56" fill="none"/><path d="M799 469 L676 522" stroke-width="72" fill="none"/><path d="M839 513 L764 548.5" stroke-width="60" fill="none"/><path d="M758 541 L651 601.5" stroke-width="66" fill="none"/><path d="M817 597 L751 636.7" stroke-width="60" fill="none"/><path d="M733 592.6 L630 684" stroke-width="66" fill="none"/><path d="M790.6 678.6 L755 694" stroke-width="58" fill="none"/><path d="M720 676.4 L667 711.7" stroke-width="62" fill="none"/><path d="M740 702 L672 758" stroke-width="94" fill="none"/><path d="M751 733.7 L606 775.6" stroke-width="66" fill="none"/><path d="M751 773.4 L664 800" stroke-width="62" fill="none"/><path d="M711 817.5 L600 905" stroke-width="72" fill="none"/><path d="M690 835 L603 908" stroke-width="76" fill="none"/><path d="M612 896 L510 979" stroke-width="64" fill="none"/></g><g filter="url(#nb7)" stroke="#000" fill="#000" stroke-linecap="round" opacity="1"><ellipse cx="682.5" cy="366" rx="25.0" ry="80.0" stroke="none" transform="rotate(-1.5 682.5 366)"/><path d="M755 359 L720 407" stroke-width="44" fill="none"/><path d="M790.6 376.5 L746.5 429.5" stroke-width="44" fill="none"/><path d="M701 458 L712.5 458" stroke-width="40" fill="none"/><path d="M799 469 L676 522" stroke-width="56" fill="none"/><path d="M839 513 L764 548.5" stroke-width="44" fill="none"/><path d="M758 541 L651 601.5" stroke-width="50" fill="none"/><path d="M817 597 L751 636.7" stroke-width="44" fill="none"/><path d="M733 592.6 L630 684" stroke-width="50" fill="none"/><path d="M790.6 678.6 L755 694" stroke-width="42" fill="none"/><path d="M720 676.4 L667 711.7" stroke-width="46" fill="none"/><path d="M740 702 L672 758" stroke-width="78" fill="none"/><path d="M751 733.7 L606 775.6" stroke-width="50" fill="none"/><path d="M751 773.4 L664 800" stroke-width="46" fill="none"/><path d="M711 817.5 L600 905" stroke-width="56" fill="none"/><path d="M690 835 L603 908" stroke-width="60" fill="none"/><path d="M612 896 L510 979" stroke-width="48" fill="none"/></g><circle cx="776" cy="750" r="16" fill="#000" opacity="0.55" filter="url(#nb7)"/></g></svg>
<div style="position:absolute;left:111.0px;top:1958.0px;width:2197.0px;height:42.0px;background:#333333;"></div>
<div style="position:absolute;left:152px;top:1966px;font-size:20px;line-height:26px;color:#cfcfcf;white-space:nowrap;letter-spacing:0.86px;"><b style="color:#f4f4f4">Drag</b> to start painting. <b style="color:#f4f4f4">Drag</b>+<b style="color:#f4f4f4">⇧</b> to continue last stroke. <b style="color:#f4f4f4">Drag</b>+<b style="color:#f4f4f4">⌥</b> to use colour picker.</div></div>
<div style="position:absolute;left:112px;top:75px;width:2196px;height:1925px;border-radius:20px;box-shadow:inset 0 1px 0 rgba(255,255,255,.26),inset 0 0 0 1px rgba(255,255,255,.16);pointer-events:none;"></div>
</body></html>
